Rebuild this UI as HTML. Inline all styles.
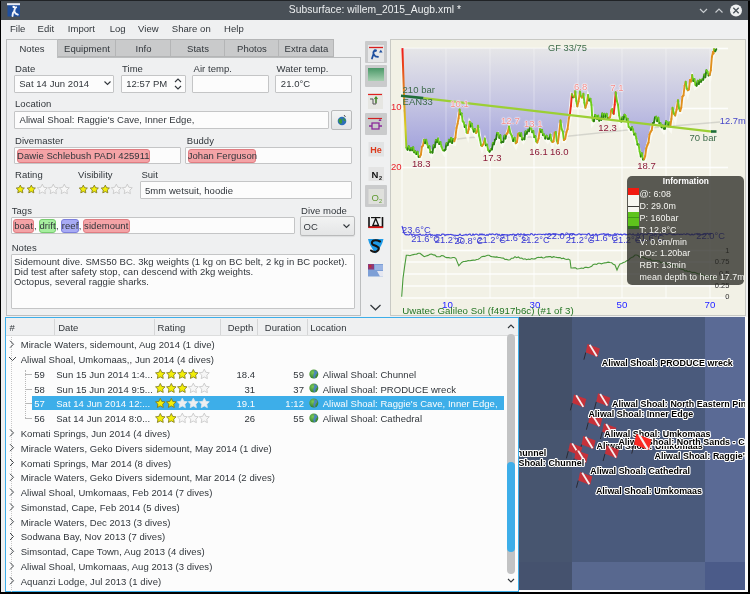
<!DOCTYPE html><html><head><meta charset="utf-8"><style>
html,body{margin:0;padding:0;width:750px;height:594px;overflow:hidden;background:#000}
body{position:relative;font-family:"Liberation Sans", sans-serif}
.t{position:absolute;white-space:nowrap;font-family:"Liberation Sans", sans-serif}
#w{position:absolute;left:0;top:0;width:750px;height:594px;will-change:transform}
.t{letter-spacing:0.05px}
</style></head><body><div id="w">
<div style="position:absolute;left:0px;top:0px;width:750px;height:594px;box-sizing:border-box;background:#000"></div>
<div style="position:absolute;left:1px;top:0px;width:747px;height:592px;box-sizing:border-box;background:#eff0f1"></div>
<div style="position:absolute;left:1px;top:0px;width:747px;height:19.5px;box-sizing:border-box;background:#495057"></div>
<div style="position:absolute;left:0px;top:0px;width:750px;height:1px;box-sizing:border-box;background:#202326"></div>
<svg style="position:absolute;left:6px;top:2px" width="16" height="16" viewBox="0 0 16 16">
<rect x="1.5" y="3" width="12.5" height="11.5" fill="#1f4f9e"/>
<rect x="1" y="1.2" width="13" height="2" fill="#e8ecf4"/>
<path d="M7.6 4.6 Q9.2 5 8.8 7 L8.2 9.2 L9.6 11.6 L11.8 12.6 M8.2 9.2 L6.9 11.2 L6.5 14 M8.8 6.2 L10.2 5.2" stroke="#f0f2f8" stroke-width="1.9" fill="none" stroke-linecap="round"/><circle cx="7.6" cy="5" r="1.1" fill="#fff"/>
</svg>
<div class="t" style="left:175.0px;width:400px;text-align:center;top:5.4px;font-size:10.3px;line-height:10.3px;color:#eef0f1;font-weight:normal;">Subsurface: willem_2015_Augb.xml *</div>
<svg style="position:absolute;left:696px;top:4px" width="50" height="14" viewBox="0 0 50 14">
<path d="M4 5 L7.5 8.5 L11 5" stroke="#c8ccd0" stroke-width="1.2" fill="none"/>
<path d="M19.5 8.5 L23 5 L26.5 8.5" stroke="#c8ccd0" stroke-width="1.2" fill="none"/>
<circle cx="40" cy="6.5" r="6" fill="#eef0f1"/>
<path d="M37.3 3.8 L42.7 9.2 M42.7 3.8 L37.3 9.2" stroke="#475057" stroke-width="1.3"/>
</svg>
<div class="t" style="left:9.9px;top:23.9px;font-size:9.5px;line-height:9.5px;color:#31363b;font-weight:normal;">File</div>
<div class="t" style="left:37.6px;top:23.9px;font-size:9.5px;line-height:9.5px;color:#31363b;font-weight:normal;">Edit</div>
<div class="t" style="left:67.8px;top:23.9px;font-size:9.5px;line-height:9.5px;color:#31363b;font-weight:normal;">Import</div>
<div class="t" style="left:109.7px;top:23.9px;font-size:9.5px;line-height:9.5px;color:#31363b;font-weight:normal;">Log</div>
<div class="t" style="left:138.1px;top:23.9px;font-size:9.5px;line-height:9.5px;color:#31363b;font-weight:normal;">View</div>
<div class="t" style="left:171.8px;top:23.9px;font-size:9.5px;line-height:9.5px;color:#31363b;font-weight:normal;">Share on</div>
<div class="t" style="left:224.1px;top:23.9px;font-size:9.5px;line-height:9.5px;color:#31363b;font-weight:normal;">Help</div>
<div style="position:absolute;left:6px;top:57px;width:355px;height:259px;box-sizing:border-box;background:#eff0f1;border:1px solid #bcbebf"></div>
<div style="position:absolute;left:6px;top:39px;width:52px;height:19px;box-sizing:border-box;background:#eff0f1;border:1px solid #bcbebf;border-bottom:none"></div>
<div class="t" style="left:-168.0px;width:400px;text-align:center;top:43.5px;font-size:9.5px;line-height:9.5px;color:#31363b;font-weight:normal;">Notes</div>
<div style="position:absolute;left:58px;top:39px;width:58px;height:18px;box-sizing:border-box;background:#c9cacb;border:1px solid #b4b5b6;border-left:none"></div>
<div class="t" style="left:-113.0px;width:400px;text-align:center;top:43.5px;font-size:9.5px;line-height:9.5px;color:#31363b;font-weight:normal;">Equipment</div>
<div style="position:absolute;left:116px;top:39px;width:55px;height:18px;box-sizing:border-box;background:#c9cacb;border:1px solid #b4b5b6;border-left:none"></div>
<div class="t" style="left:-56.5px;width:400px;text-align:center;top:43.5px;font-size:9.5px;line-height:9.5px;color:#31363b;font-weight:normal;">Info</div>
<div style="position:absolute;left:171px;top:39px;width:54px;height:18px;box-sizing:border-box;background:#c9cacb;border:1px solid #b4b5b6;border-left:none"></div>
<div class="t" style="left:-2.0px;width:400px;text-align:center;top:43.5px;font-size:9.5px;line-height:9.5px;color:#31363b;font-weight:normal;">Stats</div>
<div style="position:absolute;left:225px;top:39px;width:54px;height:18px;box-sizing:border-box;background:#c9cacb;border:1px solid #b4b5b6;border-left:none"></div>
<div class="t" style="left:52.0px;width:400px;text-align:center;top:43.5px;font-size:9.5px;line-height:9.5px;color:#31363b;font-weight:normal;">Photos</div>
<div style="position:absolute;left:279px;top:39px;width:55px;height:18px;box-sizing:border-box;background:#c9cacb;border:1px solid #b4b5b6;border-left:none"></div>
<div class="t" style="left:106.5px;width:400px;text-align:center;top:43.5px;font-size:9.5px;line-height:9.5px;color:#31363b;font-weight:normal;">Extra data</div>
<div class="t" style="left:15.0px;top:64.0px;font-size:9.5px;line-height:9.5px;color:#31363b;font-weight:normal;">Date</div>
<div class="t" style="left:122.0px;top:64.0px;font-size:9.5px;line-height:9.5px;color:#31363b;font-weight:normal;">Time</div>
<div class="t" style="left:193.5px;top:64.0px;font-size:9.5px;line-height:9.5px;color:#31363b;font-weight:normal;">Air temp.</div>
<div class="t" style="left:276.5px;top:64.0px;font-size:9.5px;line-height:9.5px;color:#31363b;font-weight:normal;">Water temp.</div>
<div style="position:absolute;left:14px;top:75px;width:100px;height:18px;box-sizing:border-box;background:#fcfcfc;border:1px solid #c4c5c6;border-radius:1px"></div>
<div class="t" style="left:19.2px;top:79.0px;font-size:9.5px;line-height:9.5px;color:#31363b;font-weight:normal;">Sat 14 Jun 2014</div>
<svg style="position:absolute;left:103px;top:80px" width="9" height="7"><path d="M1.5 1.5 L4.5 4.5 L7.5 1.5" stroke="#31363b" stroke-width="1.1" fill="none"/></svg>
<div style="position:absolute;left:121px;top:75px;width:65px;height:18px;box-sizing:border-box;background:#fcfcfc;border:1px solid #c4c5c6;border-radius:1px"></div>
<div class="t" style="left:126.2px;top:79.0px;font-size:9.5px;line-height:9.5px;color:#31363b;font-weight:normal;">12:57 PM</div>
<svg style="position:absolute;left:173px;top:77px" width="10" height="14"><path d="M2 5 L5 2 L8 5 M2 9 L5 12 L8 9" stroke="#31363b" stroke-width="1.1" fill="none"/></svg>
<div style="position:absolute;left:192px;top:75px;width:77px;height:18px;box-sizing:border-box;background:#fcfcfc;border:1px solid #c4c5c6;border-radius:1px"></div>
<div style="position:absolute;left:275px;top:75px;width:77px;height:18px;box-sizing:border-box;background:#fcfcfc;border:1px solid #c4c5c6;border-radius:1px"></div>
<div class="t" style="left:280.8px;top:79.0px;font-size:9.5px;line-height:9.5px;color:#31363b;font-weight:normal;">21.0°C</div>
<div class="t" style="left:15.0px;top:99.0px;font-size:9.5px;line-height:9.5px;color:#31363b;font-weight:normal;">Location</div>
<div style="position:absolute;left:14px;top:111px;width:315px;height:18px;box-sizing:border-box;background:#fcfcfc;border:1px solid #c4c5c6;border-radius:1px"></div>
<div class="t" style="left:19.5px;top:115.3px;font-size:9.5px;line-height:9.5px;color:#31363b;font-weight:normal;">Aliwal Shoal: Raggie's Cave, Inner Edge,</div>
<div style="position:absolute;left:331px;top:110px;width:21px;height:20px;box-sizing:border-box;background:linear-gradient(#f3f4f4,#e3e4e5);border:1px solid #b9babb;border-radius:2px"></div>
<svg style="position:absolute;left:336px;top:113px" width="12" height="14" viewBox="0 0 12 14">
<circle cx="6" cy="8" r="4.3" fill="#2e6fb8"/><path d="M3 6 Q5 5 6 7 Q7 9 5 11 Q3 10 2.5 8 Z M7 4.5 Q9 5.5 9.8 8 Q8.5 8.5 7.5 7 Z" fill="#3f9a35"/>
<path d="M8 2 L9.5 4" stroke="#555" stroke-width="1"/></svg>
<div class="t" style="left:15.0px;top:136.4px;font-size:9.5px;line-height:9.5px;color:#31363b;font-weight:normal;">Divemaster</div>
<div class="t" style="left:186.8px;top:136.4px;font-size:9.5px;line-height:9.5px;color:#31363b;font-weight:normal;">Buddy</div>
<div style="position:absolute;left:14px;top:147px;width:167px;height:17px;box-sizing:border-box;background:#fcfcfc;border:1px solid #c4c5c6;border-radius:1px"></div>
<div style="position:absolute;left:16.5px;top:148.5px;width:133.5px;height:14.5px;box-sizing:border-box;background:#f4a3a6;border:1px solid #e07d82;border-radius:3px"></div>
<div class="t" style="left:17.1px;top:151.0px;font-size:9.5px;line-height:9.5px;color:#31363b;font-weight:normal;">Dawie Schlebush PADI 425911</div>
<div style="position:absolute;left:185px;top:147px;width:167px;height:17px;box-sizing:border-box;background:#fcfcfc;border:1px solid #c4c5c6;border-radius:1px"></div>
<div style="position:absolute;left:187.5px;top:148.5px;width:68.5px;height:14.5px;box-sizing:border-box;background:#f4a3a6;border:1px solid #e07d82;border-radius:3px"></div>
<div class="t" style="left:187.7px;top:151.0px;font-size:9.5px;line-height:9.5px;color:#31363b;font-weight:normal;">Johan Ferguson</div>
<div class="t" style="left:15.0px;top:170.1px;font-size:9.5px;line-height:9.5px;color:#31363b;font-weight:normal;">Rating</div>
<div class="t" style="left:78.0px;top:170.1px;font-size:9.5px;line-height:9.5px;color:#31363b;font-weight:normal;">Visibility</div>
<div class="t" style="left:141.4px;top:170.1px;font-size:9.5px;line-height:9.5px;color:#31363b;font-weight:normal;">Suit</div>
<svg style="position:absolute;left:14.7px;top:183px" width="59" height="13" viewBox="0 0 59 13"><polygon points="5.30,2.10 6.56,4.66 9.39,5.07 7.34,7.06 7.83,9.88 5.30,8.55 2.77,9.88 3.26,7.06 1.21,5.07 4.04,4.66" fill="#f2ee08" stroke="#7a7418" stroke-width="0.8" stroke-linejoin="round"/><polygon points="16.30,2.10 17.56,4.66 20.39,5.07 18.34,7.06 18.83,9.88 16.30,8.55 13.77,9.88 14.26,7.06 12.21,5.07 15.04,4.66" fill="#f2ee08" stroke="#7a7418" stroke-width="0.8" stroke-linejoin="round"/><polygon points="27.30,1.15 28.84,4.28 32.29,4.78 29.80,7.21 30.39,10.65 27.30,9.03 24.21,10.65 24.80,7.21 22.31,4.78 25.76,4.28" fill="#f6f6f6" stroke="#c4c4c4" stroke-width="0.8" stroke-linejoin="round"/><polygon points="38.30,1.15 39.84,4.28 43.29,4.78 40.80,7.21 41.39,10.65 38.30,9.03 35.21,10.65 35.80,7.21 33.31,4.78 36.76,4.28" fill="#f6f6f6" stroke="#c4c4c4" stroke-width="0.8" stroke-linejoin="round"/><polygon points="49.30,1.15 50.84,4.28 54.29,4.78 51.80,7.21 52.39,10.65 49.30,9.03 46.21,10.65 46.80,7.21 44.31,4.78 47.76,4.28" fill="#f6f6f6" stroke="#c4c4c4" stroke-width="0.8" stroke-linejoin="round"/></svg>
<svg style="position:absolute;left:77.7px;top:183px" width="59" height="13" viewBox="0 0 59 13"><polygon points="5.30,2.10 6.56,4.66 9.39,5.07 7.34,7.06 7.83,9.88 5.30,8.55 2.77,9.88 3.26,7.06 1.21,5.07 4.04,4.66" fill="#f2ee08" stroke="#7a7418" stroke-width="0.8" stroke-linejoin="round"/><polygon points="16.30,2.10 17.56,4.66 20.39,5.07 18.34,7.06 18.83,9.88 16.30,8.55 13.77,9.88 14.26,7.06 12.21,5.07 15.04,4.66" fill="#f2ee08" stroke="#7a7418" stroke-width="0.8" stroke-linejoin="round"/><polygon points="27.30,2.10 28.56,4.66 31.39,5.07 29.34,7.06 29.83,9.88 27.30,8.55 24.77,9.88 25.26,7.06 23.21,5.07 26.04,4.66" fill="#f2ee08" stroke="#7a7418" stroke-width="0.8" stroke-linejoin="round"/><polygon points="38.30,1.15 39.84,4.28 43.29,4.78 40.80,7.21 41.39,10.65 38.30,9.03 35.21,10.65 35.80,7.21 33.31,4.78 36.76,4.28" fill="#f6f6f6" stroke="#c4c4c4" stroke-width="0.8" stroke-linejoin="round"/><polygon points="49.30,1.15 50.84,4.28 54.29,4.78 51.80,7.21 52.39,10.65 49.30,9.03 46.21,10.65 46.80,7.21 44.31,4.78 47.76,4.28" fill="#f6f6f6" stroke="#c4c4c4" stroke-width="0.8" stroke-linejoin="round"/></svg>
<div style="position:absolute;left:140px;top:181px;width:212px;height:18px;box-sizing:border-box;background:#fcfcfc;border:1px solid #c4c5c6;border-radius:1px"></div>
<div class="t" style="left:145.0px;top:185.5px;font-size:9.5px;line-height:9.5px;color:#31363b;font-weight:normal;">5mm wetsuit, hoodie</div>
<div class="t" style="left:11.7px;top:205.5px;font-size:9.5px;line-height:9.5px;color:#31363b;font-weight:normal;">Tags</div>
<div class="t" style="left:301.1px;top:205.5px;font-size:9.5px;line-height:9.5px;color:#31363b;font-weight:normal;">Dive mode</div>
<div style="position:absolute;left:11px;top:217px;width:284px;height:17px;box-sizing:border-box;background:#fcfcfc;border:1px solid #c4c5c6;border-radius:1px"></div>
<div style="position:absolute;left:13.2px;top:218.6px;width:21.000000000000004px;height:14.400000000000006px;box-sizing:border-box;background:#f4a3a6;border:1px solid #e07d82;border-radius:3px"></div>
<div class="t" style="left:14.2px;top:221.0px;font-size:9.5px;line-height:9.5px;color:#31363b;font-weight:normal;">boat</div>
<div style="position:absolute;left:38.5px;top:218.6px;width:17.700000000000003px;height:14.400000000000006px;box-sizing:border-box;background:#a6ef9f;border:1px solid #78cc70;border-radius:3px"></div>
<div class="t" style="left:39.5px;top:221.0px;font-size:9.5px;line-height:9.5px;color:#31363b;font-weight:normal;">drift</div>
<div style="position:absolute;left:60.8px;top:218.6px;width:18.200000000000003px;height:14.400000000000006px;box-sizing:border-box;background:#a8abf5;border:1px solid #7d80dd;border-radius:3px"></div>
<div class="t" style="left:61.8px;top:221.0px;font-size:9.5px;line-height:9.5px;color:#31363b;font-weight:normal;">reef</div>
<div style="position:absolute;left:83.1px;top:218.6px;width:47.400000000000006px;height:14.400000000000006px;box-sizing:border-box;background:#f4a3a6;border:1px solid #e07d82;border-radius:3px"></div>
<div class="t" style="left:84.1px;top:221.0px;font-size:9.5px;line-height:9.5px;color:#31363b;font-weight:normal;">sidemount</div>
<div class="t" style="left:34.0px;top:221.0px;font-size:9.5px;line-height:9.5px;color:#31363b;font-weight:normal;">,</div>
<div class="t" style="left:56.0px;top:221.0px;font-size:9.5px;line-height:9.5px;color:#31363b;font-weight:normal;">,</div>
<div class="t" style="left:78.7px;top:221.0px;font-size:9.5px;line-height:9.5px;color:#31363b;font-weight:normal;">,</div>
<div style="position:absolute;left:300px;top:216px;width:55px;height:20px;box-sizing:border-box;background:linear-gradient(#f2f3f3,#e4e5e6);border:1px solid #b9babb;border-radius:2px;box-shadow:0 1px 1px rgba(0,0,0,0.08)"></div>
<div class="t" style="left:303.5px;top:221.5px;font-size:9.5px;line-height:9.5px;color:#31363b;font-weight:normal;">OC</div>
<svg style="position:absolute;left:342px;top:223px" width="9" height="7"><path d="M1.5 1.5 L4.5 4.5 L7.5 1.5" stroke="#31363b" stroke-width="1.1" fill="none"/></svg>
<div class="t" style="left:11.7px;top:242.7px;font-size:9.5px;line-height:9.5px;color:#31363b;font-weight:normal;">Notes</div>
<div style="position:absolute;left:11px;top:254px;width:344px;height:55px;box-sizing:border-box;background:#fcfcfc;border:1px solid #c4c5c6;border-radius:1px"></div>
<div class="t" style="left:13.9px;top:256.8px;font-size:9.5px;line-height:9.5px;color:#31363b;font-weight:normal;">Sidemount dive. SMS50 BC. 3kg weights (1 kg on BC belt, 2 kg in BC pocket).</div>
<div class="t" style="left:13.9px;top:266.7px;font-size:9.5px;line-height:9.5px;color:#31363b;font-weight:normal;">Did test after safety stop, can descend with 2kg weights.</div>
<div class="t" style="left:13.9px;top:276.5px;font-size:9.5px;line-height:9.5px;color:#31363b;font-weight:normal;">Octopus, several raggie sharks.</div>
<div style="position:absolute;left:365px;top:40.5px;width:22px;height:22.5px;box-sizing:border-box;background:#cacbcc;border-radius:1px"></div>
<div style="position:absolute;left:365px;top:64.5px;width:22px;height:22.5px;box-sizing:border-box;background:#cacbcc;border-radius:1px"></div>
<div style="position:absolute;left:365px;top:112.5px;width:22px;height:22.5px;box-sizing:border-box;background:#cacbcc;border-radius:1px"></div>
<div style="position:absolute;left:365px;top:184.5px;width:22px;height:22.5px;box-sizing:border-box;background:#cacbcc;border-radius:1px"></div>
<svg style="position:absolute;left:365px;top:41px" width="21" height="280" viewBox="0 0 21 280">
<!-- 1 -->
<rect x="3" y="4" width="16" height="17" fill="#e6e7e8"/>
<line x1="4" y1="6.5" x2="18" y2="6.5" stroke="#d81e1e" stroke-width="1.3"/>
<path d="M9.5 9.5 Q8 11 8.5 13 L7 17.5 M8.5 13 L10.5 15.5 L13 15.8" stroke="#1f4f9e" stroke-width="1.8" fill="none" stroke-linecap="round"/>
<circle cx="10.5" cy="9.6" r="1.4" fill="#1f4f9e"/>
<path d="M14 11.5 L15.8 8.8 L17.6 11.5 Z" fill="#1f4f9e"/>
<!-- 2 -->
<defs><linearGradient id="g2" x1="0" y1="0" x2="0" y2="1"><stop offset="0" stop-color="#4a9868"/><stop offset="1" stop-color="#a6d0b0"/></linearGradient></defs>
<rect x="3" y="27" width="16" height="13" fill="url(#g2)"/>
<!-- 3 -->
<rect x="3" y="52" width="15" height="16" fill="#e6e6e2"/>
<line x1="3" y1="53.5" x2="17" y2="53.5" stroke="#e02020" stroke-width="1.2"/>
<path d="M5 58 L8 58 L8 63 L11 63 L11 58" stroke="#555" stroke-width="1" fill="none"/>
<path d="M11 62 L11 56.5 M9.5 58 L11 56 L12.5 58" stroke="#3b8a20" stroke-width="1.1" fill="none"/>
<!-- 4 -->
<line x1="3" y1="77.5" x2="17" y2="77.5" stroke="#d02020" stroke-width="1.2"/>
<rect x="7" y="82" width="7" height="6" fill="none" stroke="#8a2a9a" stroke-width="1.3"/>
<path d="M4 85 L7 85 M14 85 L17 85" stroke="#8a2a9a" stroke-width="1.3"/>
<path d="M13.5 80 L15 77.5 L16.5 80 Z" fill="#8a2a9a"/>
<!-- He -->
<rect x="3.5" y="101" width="15.5" height="14.5" fill="#e2e3e4"/>
<text x="11" y="112" font-family="Liberation Sans" font-size="9" font-weight="bold" fill="#dd3a1c" text-anchor="middle">He</text>
<!-- N2 -->
<rect x="3.5" y="126" width="15.5" height="14" fill="#e4e4e4"/>
<text x="6.5" y="137" font-family="Liberation Sans" font-size="9.5" font-weight="bold" fill="#111">N</text>
<text x="14" y="138.5" font-family="Liberation Sans" font-size="5.5" font-weight="bold" fill="#111">2</text>
<!-- O2 -->
<rect x="3.5" y="148" width="15.5" height="15" fill="#dfe0dc"/>
<text x="6.5" y="160" font-family="Liberation Sans" font-size="9.5" fill="#5f9a30">O</text>
<text x="14" y="161.5" font-family="Liberation Sans" font-size="5.5" fill="#5f9a30">2</text>
<!-- delta -->
<path d="M4 176 L4 186 L17.5 186 L17.5 176" stroke="#111" stroke-width="1.6" fill="none"/>
<line x1="6" y1="176.6" x2="15.5" y2="176.6" stroke="#111" stroke-width="1.2"/>
<path d="M10.7 177.5 L7.8 184.5 L13.6 184.5 Z" stroke="#111" stroke-width="1.3" fill="none"/>
<line x1="3.5" y1="186.3" x2="18" y2="186.3" stroke="#e01010" stroke-width="1.6"/>
<!-- S -->
<path d="M3 198 L18.5 198 Q17 205 10.8 212.5 Q4.5 205 3 198 Z" fill="#1e9be8"/>
<path d="M15 200.5 Q11 198.3 8 199.8 Q5.8 201.5 8 203.8 Q11.5 205 13.5 206.5 Q14.5 209 11.5 210.5 Q8.5 211.5 6 209.5" stroke="#151515" stroke-width="2.1" fill="none" stroke-linecap="round"/>
<!-- photo -->
<rect x="3" y="223" width="15" height="12.5" fill="#7d9fd6"/>
<rect x="3" y="223" width="6" height="5.5" fill="#8a3a7a"/>
<rect x="4" y="224" width="2.5" height="2.5" fill="#c02a3a"/>
<rect x="10" y="224" width="8" height="5" fill="#9ab4e4"/>
<path d="M12 230 L18 230 L18 235.5 L15 235.5 Z" fill="#e6e8f2"/>
<!-- chevron -->
<path d="M5.5 264 L10.5 268.8 L15.5 264" stroke="#31363b" stroke-width="1.2" fill="none"/>
</svg>
<div style="position:absolute;left:390px;top:39px;width:356px;height:277px;box-sizing:border-box;border:1px solid #c8c9c4;background:#f2f1e6"></div>
<svg style="position:absolute;left:0;top:0" width="750" height="594" viewBox="0 0 750 594">
<defs><linearGradient id="pf" x1="0" y1="48" x2="0" y2="160" gradientUnits="userSpaceOnUse"><stop offset="0" stop-color="#e6e6e8"/><stop offset="0.5" stop-color="#c4c4e2"/><stop offset="1" stop-color="#9c9cdc"/></linearGradient></defs>
<line x1="402" y1="48" x2="402" y2="298" stroke="#ffffff" stroke-width="1.1" opacity="0.75"/>
<line x1="446" y1="48" x2="446" y2="298" stroke="#ffffff" stroke-width="1.1" opacity="0.75"/>
<line x1="490" y1="48" x2="490" y2="298" stroke="#ffffff" stroke-width="1.1" opacity="0.75"/>
<line x1="534" y1="48" x2="534" y2="298" stroke="#ffffff" stroke-width="1.1" opacity="0.75"/>
<line x1="578" y1="48" x2="578" y2="298" stroke="#ffffff" stroke-width="1.1" opacity="0.75"/>
<line x1="622" y1="48" x2="622" y2="298" stroke="#ffffff" stroke-width="1.1" opacity="0.75"/>
<line x1="666" y1="48" x2="666" y2="298" stroke="#ffffff" stroke-width="1.1" opacity="0.75"/>
<line x1="710" y1="48" x2="710" y2="298" stroke="#ffffff" stroke-width="1.1" opacity="0.75"/>
<line x1="402" y1="48.5" x2="728" y2="48.5" stroke="#ffffff" stroke-width="1.3" opacity="0.9"/>
<line x1="402" y1="108.5" x2="728" y2="108.5" stroke="#ffffff" stroke-width="1.3" opacity="0.9"/>
<line x1="402" y1="167.5" x2="728" y2="167.5" stroke="#ffffff" stroke-width="1.3" opacity="0.9"/>
<line x1="402" y1="250.5" x2="728" y2="250.5" stroke="#ffffff" stroke-width="1.3" opacity="0.9"/>
<line x1="402" y1="262" x2="728" y2="262" stroke="#ffffff" stroke-width="1.3" opacity="0.9"/>
<line x1="402" y1="274" x2="728" y2="274" stroke="#ffffff" stroke-width="1.3" opacity="0.9"/>
<line x1="402" y1="286" x2="728" y2="286" stroke="#ffffff" stroke-width="1.3" opacity="0.9"/>
<line x1="402" y1="298" x2="728" y2="298" stroke="#ffffff" stroke-width="1.3" opacity="0.9"/>
<path d="M404 110 Q410 140 432 144 Q455 138 480 137 L560 137 Q640 128 720 122" stroke="#c8c8c0" stroke-width="1.3" fill="none" opacity="0.7"/>
<polygon points="402.4,48.1 404.4,106.2 406.4,147.9 411.2,147.9 415.2,151.3 419.9,156.7 424,139.8 427.3,143.9 431.4,152 438.1,138.5 441.5,146.6 444.2,150.6 448.9,139.8 454.3,141.2 457.6,123.7 459.6,109.5 463.7,122.3 467.7,133.1 469.7,121.6 472.7,128.4 476,133 478,125.7 480.1,139.8 482.1,145.9 484.8,138.5 488.2,150 490.9,149.3 494.9,139.8 498.3,133.1 502.3,141.9 506.4,134.4 509,126.4 511.8,135.8 515.8,143.2 519.2,133.1 523.2,138.5 527.9,129.7 531.3,128.4 537.3,142.5 540,129 544,134.4 547.7,138.7 550.4,134.6 552.4,142 555.8,132 557.8,143.4 560.5,120.5 563.9,140 566.5,132 569.9,114.4 571.9,94.2 574,96.9 575.3,90.9 577.3,106.4 580,91.5 582,97.6 583.4,93.6 585.4,107.7 588.1,94.9 591.5,105 592.8,120.5 596.2,115.8 600.2,118.5 604.3,113.8 609,117.8 612.3,109 613.7,113.8 615.7,92.2 620.4,121.2 625.5,115.5 629.8,127.5 633.1,129.7 636.4,138.5 639.7,151.6 644.1,159.3 647.4,145 650.6,131.9 652.8,123.2 656.1,116.6 660.5,123.2 663.8,128.6 667.1,122.1 670.3,126.5 672.5,107.8 675.2,115.5 678,100.2 680.2,111.1 685.7,81.6 687.8,90.3 692.2,75 695.5,84.9 702.1,79.4 707.5,71.7 709.7,75 713,52 714.1,49.2 716.3,49.2 716.3,48.5 402.4,48.5" fill="url(#pf)"/>
<line x1="446" y1="49" x2="446" y2="165" stroke="#ffffff" stroke-width="1.1" opacity="0.3"/>
<line x1="490" y1="49" x2="490" y2="165" stroke="#ffffff" stroke-width="1.1" opacity="0.3"/>
<line x1="534" y1="49" x2="534" y2="165" stroke="#ffffff" stroke-width="1.1" opacity="0.3"/>
<line x1="578" y1="49" x2="578" y2="165" stroke="#ffffff" stroke-width="1.1" opacity="0.3"/>
<line x1="622" y1="49" x2="622" y2="165" stroke="#ffffff" stroke-width="1.1" opacity="0.3"/>
<line x1="666" y1="49" x2="666" y2="165" stroke="#ffffff" stroke-width="1.1" opacity="0.3"/>
<line x1="710" y1="49" x2="710" y2="165" stroke="#ffffff" stroke-width="1.1" opacity="0.3"/>
<linearGradient id="dg" x1="0" y1="48" x2="0" y2="148" gradientUnits="userSpaceOnUse"><stop offset="0" stop-color="#f01818"/><stop offset="0.45" stop-color="#e08a20"/><stop offset="0.8" stop-color="#d8d020"/><stop offset="1" stop-color="#8ac820"/></linearGradient>
<polyline points="406.4,150.4 411.2,150.4 415.2,153.8 419.9,159.2 424,142.3 427.3,146.4 431.4,154.5 438.1,141.0 441.5,149.1 444.2,153.1 448.9,142.3 454.3,143.7 457.6,126.2 459.6,112.0 463.7,124.8 467.7,135.6 469.7,124.1 472.7,130.9 476,135.5 478,128.2 480.1,142.3 482.1,148.4 484.8,141.0 488.2,152.5 490.9,151.8 494.9,142.3 498.3,135.6 502.3,144.4 506.4,136.9 509,128.9 511.8,138.3 515.8,145.7 519.2,135.6 523.2,141.0 527.9,132.2 531.3,130.9 537.3,145.0 540,131.5 544,136.9 547.7,141.2 550.4,137.1 552.4,144.5 555.8,134.5 557.8,145.9 560.5,123.0 563.9,142.5 566.5,134.5 569.9,116.9 571.9,96.7 574,99.4 575.3,93.4 577.3,108.9 580,94.0 582,100.1 583.4,96.1 585.4,110.2 588.1,97.4 591.5,107.5 592.8,123.0 596.2,118.3 600.2,121.0 604.3,116.3 609,120.3 612.3,111.5 613.7,116.3 615.7,94.7 620.4,123.7 625.5,118.0 629.8,130.0 633.1,132.2 636.4,141.0 639.7,154.1 644.1,161.8 647.4,147.5 650.6,134.4 652.8,125.7 656.1,119.1 660.5,125.7 663.8,131.1 667.1,124.6 670.3,129.0 672.5,110.3 675.2,118.0 678,102.7 680.2,113.6 685.7,84.1 687.8,92.8 692.2,77.5 695.5,87.4 702.1,81.9 707.5,74.2 709.7,77.5 713,54.5 714.1,51.7 716.3,51.7" stroke="#fbfbf4" stroke-width="4" fill="none" opacity="0.9"/>
<polyline points="402.4,48.1 404.4,106.2 406.4,147.9" stroke="url(#dg)" stroke-width="2" fill="none"/>
<line x1="406.4" y1="147.9" x2="407.6" y2="149.8" stroke="#6ccc1e" stroke-width="1.9" stroke-linecap="round"/>
<line x1="407.6" y1="149.8" x2="408.8" y2="146.3" stroke="#2a7a16" stroke-width="1.9" stroke-linecap="round"/>
<line x1="408.8" y1="146.3" x2="410.0" y2="150.3" stroke="#6ccc1e" stroke-width="1.9" stroke-linecap="round"/>
<line x1="410.0" y1="150.3" x2="411.2" y2="147.9" stroke="#2a7a16" stroke-width="1.9" stroke-linecap="round"/>
<line x1="411.2" y1="147.9" x2="412.2" y2="150.3" stroke="#6ccc1e" stroke-width="1.9" stroke-linecap="round"/>
<line x1="412.2" y1="150.3" x2="413.2" y2="147.3" stroke="#2a7a16" stroke-width="1.9" stroke-linecap="round"/>
<line x1="413.2" y1="147.3" x2="414.2" y2="152.4" stroke="#6ccc1e" stroke-width="1.9" stroke-linecap="round"/>
<line x1="414.2" y1="152.4" x2="415.2" y2="151.3" stroke="#2a7a16" stroke-width="1.9" stroke-linecap="round"/>
<line x1="415.2" y1="151.3" x2="416.4" y2="154.1" stroke="#6ccc1e" stroke-width="1.9" stroke-linecap="round"/>
<line x1="416.4" y1="154.1" x2="417.5" y2="151.8" stroke="#2a7a16" stroke-width="1.9" stroke-linecap="round"/>
<line x1="417.5" y1="151.8" x2="418.7" y2="156.8" stroke="#6ccc1e" stroke-width="1.9" stroke-linecap="round"/>
<line x1="418.7" y1="156.8" x2="419.9" y2="156.7" stroke="#2a7a16" stroke-width="1.9" stroke-linecap="round"/>
<line x1="419.9" y1="156.7" x2="420.9" y2="154.6" stroke="#e0901e" stroke-width="1.9" stroke-linecap="round"/>
<line x1="420.9" y1="154.6" x2="421.9" y2="146.7" stroke="#e0901e" stroke-width="1.9" stroke-linecap="round"/>
<line x1="421.9" y1="146.7" x2="423.0" y2="145.6" stroke="#e0901e" stroke-width="1.9" stroke-linecap="round"/>
<line x1="423.0" y1="145.6" x2="424.0" y2="139.8" stroke="#e0901e" stroke-width="1.9" stroke-linecap="round"/>
<line x1="424.0" y1="139.8" x2="425.1" y2="143.2" stroke="#6ccc1e" stroke-width="1.9" stroke-linecap="round"/>
<line x1="425.1" y1="143.2" x2="426.2" y2="139.8" stroke="#2a7a16" stroke-width="1.9" stroke-linecap="round"/>
<line x1="426.2" y1="139.8" x2="427.3" y2="143.9" stroke="#6ccc1e" stroke-width="1.9" stroke-linecap="round"/>
<line x1="427.3" y1="143.9" x2="428.3" y2="147.5" stroke="#6ccc1e" stroke-width="1.9" stroke-linecap="round"/>
<line x1="428.3" y1="147.5" x2="429.4" y2="146.2" stroke="#2a7a16" stroke-width="1.9" stroke-linecap="round"/>
<line x1="429.4" y1="146.2" x2="430.4" y2="152.4" stroke="#6ccc1e" stroke-width="1.9" stroke-linecap="round"/>
<line x1="430.4" y1="152.4" x2="431.4" y2="152.0" stroke="#2a7a16" stroke-width="1.9" stroke-linecap="round"/>
<line x1="431.4" y1="152.0" x2="432.5" y2="152.7" stroke="#6ccc1e" stroke-width="1.9" stroke-linecap="round"/>
<line x1="432.5" y1="152.7" x2="433.6" y2="145.2" stroke="#2a7a16" stroke-width="1.9" stroke-linecap="round"/>
<line x1="433.6" y1="145.2" x2="434.8" y2="147.3" stroke="#6ccc1e" stroke-width="1.9" stroke-linecap="round"/>
<line x1="434.8" y1="147.3" x2="435.9" y2="140.0" stroke="#2a7a16" stroke-width="1.9" stroke-linecap="round"/>
<line x1="435.9" y1="140.0" x2="437.0" y2="142.2" stroke="#6ccc1e" stroke-width="1.9" stroke-linecap="round"/>
<line x1="437.0" y1="142.2" x2="438.1" y2="138.5" stroke="#2a7a16" stroke-width="1.9" stroke-linecap="round"/>
<line x1="438.1" y1="138.5" x2="439.2" y2="144.0" stroke="#6ccc1e" stroke-width="1.9" stroke-linecap="round"/>
<line x1="439.2" y1="144.0" x2="440.4" y2="142.0" stroke="#2a7a16" stroke-width="1.9" stroke-linecap="round"/>
<line x1="440.4" y1="142.0" x2="441.5" y2="146.6" stroke="#6ccc1e" stroke-width="1.9" stroke-linecap="round"/>
<line x1="441.5" y1="146.6" x2="442.9" y2="150.2" stroke="#6ccc1e" stroke-width="1.9" stroke-linecap="round"/>
<line x1="442.9" y1="150.2" x2="444.2" y2="150.6" stroke="#6ccc1e" stroke-width="1.9" stroke-linecap="round"/>
<line x1="444.2" y1="150.6" x2="445.4" y2="149.5" stroke="#2a7a16" stroke-width="1.9" stroke-linecap="round"/>
<line x1="445.4" y1="149.5" x2="446.5" y2="143.3" stroke="#2a7a16" stroke-width="1.9" stroke-linecap="round"/>
<line x1="446.5" y1="143.3" x2="447.7" y2="145.2" stroke="#6ccc1e" stroke-width="1.9" stroke-linecap="round"/>
<line x1="447.7" y1="145.2" x2="448.9" y2="139.8" stroke="#2a7a16" stroke-width="1.9" stroke-linecap="round"/>
<line x1="448.9" y1="139.8" x2="450.0" y2="141.8" stroke="#6ccc1e" stroke-width="1.9" stroke-linecap="round"/>
<line x1="450.0" y1="141.8" x2="451.1" y2="138.0" stroke="#2a7a16" stroke-width="1.9" stroke-linecap="round"/>
<line x1="451.1" y1="138.0" x2="452.1" y2="143.1" stroke="#6ccc1e" stroke-width="1.9" stroke-linecap="round"/>
<line x1="452.1" y1="143.1" x2="453.2" y2="138.9" stroke="#2a7a16" stroke-width="1.9" stroke-linecap="round"/>
<line x1="453.2" y1="138.9" x2="454.3" y2="141.2" stroke="#6ccc1e" stroke-width="1.9" stroke-linecap="round"/>
<line x1="454.3" y1="141.2" x2="455.4" y2="137.6" stroke="#e0901e" stroke-width="1.9" stroke-linecap="round"/>
<line x1="455.4" y1="137.6" x2="456.5" y2="128.0" stroke="#e0901e" stroke-width="1.9" stroke-linecap="round"/>
<line x1="456.5" y1="128.0" x2="457.6" y2="123.7" stroke="#e0901e" stroke-width="1.9" stroke-linecap="round"/>
<line x1="457.6" y1="123.7" x2="458.6" y2="118.1" stroke="#e0901e" stroke-width="1.9" stroke-linecap="round"/>
<line x1="458.6" y1="118.1" x2="459.6" y2="109.5" stroke="#e0901e" stroke-width="1.9" stroke-linecap="round"/>
<line x1="459.6" y1="109.5" x2="460.6" y2="114.4" stroke="#6ccc1e" stroke-width="1.9" stroke-linecap="round"/>
<line x1="460.6" y1="114.4" x2="461.6" y2="113.4" stroke="#2a7a16" stroke-width="1.9" stroke-linecap="round"/>
<line x1="461.6" y1="113.4" x2="462.7" y2="121.2" stroke="#6ccc1e" stroke-width="1.9" stroke-linecap="round"/>
<line x1="462.7" y1="121.2" x2="463.7" y2="122.3" stroke="#6ccc1e" stroke-width="1.9" stroke-linecap="round"/>
<line x1="463.7" y1="122.3" x2="464.7" y2="126.9" stroke="#6ccc1e" stroke-width="1.9" stroke-linecap="round"/>
<line x1="464.7" y1="126.9" x2="465.7" y2="125.4" stroke="#2a7a16" stroke-width="1.9" stroke-linecap="round"/>
<line x1="465.7" y1="125.4" x2="466.7" y2="132.5" stroke="#6ccc1e" stroke-width="1.9" stroke-linecap="round"/>
<line x1="466.7" y1="132.5" x2="467.7" y2="133.1" stroke="#6ccc1e" stroke-width="1.9" stroke-linecap="round"/>
<line x1="467.7" y1="133.1" x2="468.7" y2="129.2" stroke="#e0901e" stroke-width="1.9" stroke-linecap="round"/>
<line x1="468.7" y1="129.2" x2="469.7" y2="121.6" stroke="#e0901e" stroke-width="1.9" stroke-linecap="round"/>
<line x1="469.7" y1="121.6" x2="470.7" y2="126.5" stroke="#6ccc1e" stroke-width="1.9" stroke-linecap="round"/>
<line x1="470.7" y1="126.5" x2="471.7" y2="123.6" stroke="#2a7a16" stroke-width="1.9" stroke-linecap="round"/>
<line x1="471.7" y1="123.6" x2="472.7" y2="128.4" stroke="#6ccc1e" stroke-width="1.9" stroke-linecap="round"/>
<line x1="472.7" y1="128.4" x2="473.8" y2="131.7" stroke="#6ccc1e" stroke-width="1.9" stroke-linecap="round"/>
<line x1="473.8" y1="131.7" x2="474.9" y2="129.1" stroke="#2a7a16" stroke-width="1.9" stroke-linecap="round"/>
<line x1="474.9" y1="129.1" x2="476.0" y2="133.0" stroke="#6ccc1e" stroke-width="1.9" stroke-linecap="round"/>
<line x1="476.0" y1="133.0" x2="477.0" y2="131.6" stroke="#e0901e" stroke-width="1.9" stroke-linecap="round"/>
<line x1="477.0" y1="131.6" x2="478.0" y2="125.7" stroke="#e0901e" stroke-width="1.9" stroke-linecap="round"/>
<line x1="478.0" y1="125.7" x2="479.1" y2="135.6" stroke="#6ccc1e" stroke-width="1.9" stroke-linecap="round"/>
<line x1="479.1" y1="135.6" x2="480.1" y2="139.8" stroke="#6ccc1e" stroke-width="1.9" stroke-linecap="round"/>
<line x1="480.1" y1="139.8" x2="481.1" y2="145.4" stroke="#6ccc1e" stroke-width="1.9" stroke-linecap="round"/>
<line x1="481.1" y1="145.4" x2="482.1" y2="145.9" stroke="#6ccc1e" stroke-width="1.9" stroke-linecap="round"/>
<line x1="482.1" y1="145.9" x2="483.5" y2="144.1" stroke="#e0901e" stroke-width="1.9" stroke-linecap="round"/>
<line x1="483.5" y1="144.1" x2="484.8" y2="138.5" stroke="#e0901e" stroke-width="1.9" stroke-linecap="round"/>
<line x1="484.8" y1="138.5" x2="485.9" y2="145.3" stroke="#6ccc1e" stroke-width="1.9" stroke-linecap="round"/>
<line x1="485.9" y1="145.3" x2="487.1" y2="144.6" stroke="#2a7a16" stroke-width="1.9" stroke-linecap="round"/>
<line x1="487.1" y1="144.6" x2="488.2" y2="150.0" stroke="#6ccc1e" stroke-width="1.9" stroke-linecap="round"/>
<line x1="488.2" y1="150.0" x2="489.5" y2="151.7" stroke="#6ccc1e" stroke-width="1.9" stroke-linecap="round"/>
<line x1="489.5" y1="151.7" x2="490.9" y2="149.3" stroke="#2a7a16" stroke-width="1.9" stroke-linecap="round"/>
<line x1="490.9" y1="149.3" x2="491.9" y2="149.5" stroke="#6ccc1e" stroke-width="1.9" stroke-linecap="round"/>
<line x1="491.9" y1="149.5" x2="492.9" y2="142.9" stroke="#2a7a16" stroke-width="1.9" stroke-linecap="round"/>
<line x1="492.9" y1="142.9" x2="493.9" y2="144.4" stroke="#6ccc1e" stroke-width="1.9" stroke-linecap="round"/>
<line x1="493.9" y1="144.4" x2="494.9" y2="139.8" stroke="#2a7a16" stroke-width="1.9" stroke-linecap="round"/>
<line x1="494.9" y1="139.8" x2="496.0" y2="139.0" stroke="#2a7a16" stroke-width="1.9" stroke-linecap="round"/>
<line x1="496.0" y1="139.0" x2="497.2" y2="132.9" stroke="#2a7a16" stroke-width="1.9" stroke-linecap="round"/>
<line x1="497.2" y1="132.9" x2="498.3" y2="133.1" stroke="#6ccc1e" stroke-width="1.9" stroke-linecap="round"/>
<line x1="498.3" y1="133.1" x2="499.3" y2="137.9" stroke="#6ccc1e" stroke-width="1.9" stroke-linecap="round"/>
<line x1="499.3" y1="137.9" x2="500.3" y2="135.2" stroke="#2a7a16" stroke-width="1.9" stroke-linecap="round"/>
<line x1="500.3" y1="135.2" x2="501.3" y2="142.5" stroke="#6ccc1e" stroke-width="1.9" stroke-linecap="round"/>
<line x1="501.3" y1="142.5" x2="502.3" y2="141.9" stroke="#2a7a16" stroke-width="1.9" stroke-linecap="round"/>
<line x1="502.3" y1="141.9" x2="503.3" y2="141.9" stroke="#2a7a16" stroke-width="1.9" stroke-linecap="round"/>
<line x1="503.3" y1="141.9" x2="504.4" y2="135.6" stroke="#2a7a16" stroke-width="1.9" stroke-linecap="round"/>
<line x1="504.4" y1="135.6" x2="505.4" y2="138.6" stroke="#6ccc1e" stroke-width="1.9" stroke-linecap="round"/>
<line x1="505.4" y1="138.6" x2="506.4" y2="134.4" stroke="#2a7a16" stroke-width="1.9" stroke-linecap="round"/>
<line x1="506.4" y1="134.4" x2="507.7" y2="132.7" stroke="#e0901e" stroke-width="1.9" stroke-linecap="round"/>
<line x1="507.7" y1="132.7" x2="509.0" y2="126.4" stroke="#e0901e" stroke-width="1.9" stroke-linecap="round"/>
<line x1="509.0" y1="126.4" x2="510.4" y2="133.2" stroke="#6ccc1e" stroke-width="1.9" stroke-linecap="round"/>
<line x1="510.4" y1="133.2" x2="511.8" y2="135.8" stroke="#6ccc1e" stroke-width="1.9" stroke-linecap="round"/>
<line x1="511.8" y1="135.8" x2="513.1" y2="141.0" stroke="#6ccc1e" stroke-width="1.9" stroke-linecap="round"/>
<line x1="513.1" y1="141.0" x2="514.5" y2="137.8" stroke="#2a7a16" stroke-width="1.9" stroke-linecap="round"/>
<line x1="514.5" y1="137.8" x2="515.8" y2="143.2" stroke="#6ccc1e" stroke-width="1.9" stroke-linecap="round"/>
<line x1="515.8" y1="143.2" x2="516.9" y2="142.0" stroke="#e0901e" stroke-width="1.9" stroke-linecap="round"/>
<line x1="516.9" y1="142.0" x2="518.1" y2="134.0" stroke="#e0901e" stroke-width="1.9" stroke-linecap="round"/>
<line x1="518.1" y1="134.0" x2="519.2" y2="133.1" stroke="#e0901e" stroke-width="1.9" stroke-linecap="round"/>
<line x1="519.2" y1="133.1" x2="520.2" y2="135.9" stroke="#6ccc1e" stroke-width="1.9" stroke-linecap="round"/>
<line x1="520.2" y1="135.9" x2="521.2" y2="133.3" stroke="#2a7a16" stroke-width="1.9" stroke-linecap="round"/>
<line x1="521.2" y1="133.3" x2="522.2" y2="139.6" stroke="#6ccc1e" stroke-width="1.9" stroke-linecap="round"/>
<line x1="522.2" y1="139.6" x2="523.2" y2="138.5" stroke="#2a7a16" stroke-width="1.9" stroke-linecap="round"/>
<line x1="523.2" y1="138.5" x2="524.4" y2="139.3" stroke="#6ccc1e" stroke-width="1.9" stroke-linecap="round"/>
<line x1="524.4" y1="139.3" x2="525.5" y2="131.4" stroke="#2a7a16" stroke-width="1.9" stroke-linecap="round"/>
<line x1="525.5" y1="131.4" x2="526.7" y2="133.8" stroke="#6ccc1e" stroke-width="1.9" stroke-linecap="round"/>
<line x1="526.7" y1="133.8" x2="527.9" y2="129.7" stroke="#2a7a16" stroke-width="1.9" stroke-linecap="round"/>
<line x1="527.9" y1="129.7" x2="529.0" y2="131.3" stroke="#6ccc1e" stroke-width="1.9" stroke-linecap="round"/>
<line x1="529.0" y1="131.3" x2="530.2" y2="126.4" stroke="#2a7a16" stroke-width="1.9" stroke-linecap="round"/>
<line x1="530.2" y1="126.4" x2="531.3" y2="128.4" stroke="#6ccc1e" stroke-width="1.9" stroke-linecap="round"/>
<line x1="531.3" y1="128.4" x2="532.3" y2="132.2" stroke="#6ccc1e" stroke-width="1.9" stroke-linecap="round"/>
<line x1="532.3" y1="132.2" x2="533.3" y2="131.0" stroke="#2a7a16" stroke-width="1.9" stroke-linecap="round"/>
<line x1="533.3" y1="131.0" x2="534.3" y2="137.1" stroke="#6ccc1e" stroke-width="1.9" stroke-linecap="round"/>
<line x1="534.3" y1="137.1" x2="535.3" y2="136.2" stroke="#2a7a16" stroke-width="1.9" stroke-linecap="round"/>
<line x1="535.3" y1="136.2" x2="536.3" y2="141.6" stroke="#6ccc1e" stroke-width="1.9" stroke-linecap="round"/>
<line x1="536.3" y1="141.6" x2="537.3" y2="142.5" stroke="#6ccc1e" stroke-width="1.9" stroke-linecap="round"/>
<line x1="537.3" y1="142.5" x2="538.6" y2="138.4" stroke="#e0901e" stroke-width="1.9" stroke-linecap="round"/>
<line x1="538.6" y1="138.4" x2="540.0" y2="129.0" stroke="#e0901e" stroke-width="1.9" stroke-linecap="round"/>
<line x1="540.0" y1="129.0" x2="541.0" y2="132.0" stroke="#6ccc1e" stroke-width="1.9" stroke-linecap="round"/>
<line x1="541.0" y1="132.0" x2="542.0" y2="129.9" stroke="#2a7a16" stroke-width="1.9" stroke-linecap="round"/>
<line x1="542.0" y1="129.9" x2="543.0" y2="135.1" stroke="#6ccc1e" stroke-width="1.9" stroke-linecap="round"/>
<line x1="543.0" y1="135.1" x2="544.0" y2="134.4" stroke="#2a7a16" stroke-width="1.9" stroke-linecap="round"/>
<line x1="544.0" y1="134.4" x2="545.2" y2="138.6" stroke="#6ccc1e" stroke-width="1.9" stroke-linecap="round"/>
<line x1="545.2" y1="138.6" x2="546.5" y2="135.7" stroke="#2a7a16" stroke-width="1.9" stroke-linecap="round"/>
<line x1="546.5" y1="135.7" x2="547.7" y2="138.7" stroke="#6ccc1e" stroke-width="1.9" stroke-linecap="round"/>
<line x1="547.7" y1="138.7" x2="549.0" y2="138.8" stroke="#2a7a16" stroke-width="1.9" stroke-linecap="round"/>
<line x1="549.0" y1="138.8" x2="550.4" y2="134.6" stroke="#2a7a16" stroke-width="1.9" stroke-linecap="round"/>
<line x1="550.4" y1="134.6" x2="551.4" y2="140.6" stroke="#6ccc1e" stroke-width="1.9" stroke-linecap="round"/>
<line x1="551.4" y1="140.6" x2="552.4" y2="142.0" stroke="#6ccc1e" stroke-width="1.9" stroke-linecap="round"/>
<line x1="552.4" y1="142.0" x2="553.5" y2="141.5" stroke="#e0901e" stroke-width="1.9" stroke-linecap="round"/>
<line x1="553.5" y1="141.5" x2="554.7" y2="132.6" stroke="#e0901e" stroke-width="1.9" stroke-linecap="round"/>
<line x1="554.7" y1="132.6" x2="555.8" y2="132.0" stroke="#e0901e" stroke-width="1.9" stroke-linecap="round"/>
<line x1="555.8" y1="132.0" x2="556.8" y2="140.5" stroke="#6ccc1e" stroke-width="1.9" stroke-linecap="round"/>
<line x1="556.8" y1="140.5" x2="557.8" y2="143.4" stroke="#6ccc1e" stroke-width="1.9" stroke-linecap="round"/>
<line x1="557.8" y1="143.4" x2="559.1" y2="133.8" stroke="#e0901e" stroke-width="1.9" stroke-linecap="round"/>
<line x1="559.1" y1="133.8" x2="560.5" y2="120.5" stroke="#e0901e" stroke-width="1.9" stroke-linecap="round"/>
<line x1="560.5" y1="120.5" x2="561.6" y2="129.1" stroke="#6ccc1e" stroke-width="1.9" stroke-linecap="round"/>
<line x1="561.6" y1="129.1" x2="562.8" y2="131.5" stroke="#6ccc1e" stroke-width="1.9" stroke-linecap="round"/>
<line x1="562.8" y1="131.5" x2="563.9" y2="140.0" stroke="#6ccc1e" stroke-width="1.9" stroke-linecap="round"/>
<line x1="563.9" y1="140.0" x2="565.2" y2="138.8" stroke="#e0901e" stroke-width="1.9" stroke-linecap="round"/>
<line x1="565.2" y1="138.8" x2="566.5" y2="132.0" stroke="#e0901e" stroke-width="1.9" stroke-linecap="round"/>
<line x1="566.5" y1="132.0" x2="567.6" y2="129.1" stroke="#e0901e" stroke-width="1.9" stroke-linecap="round"/>
<line x1="567.6" y1="129.1" x2="568.8" y2="118.6" stroke="#e0901e" stroke-width="1.9" stroke-linecap="round"/>
<line x1="568.8" y1="118.6" x2="569.9" y2="114.4" stroke="#e0901e" stroke-width="1.9" stroke-linecap="round"/>
<line x1="569.9" y1="114.4" x2="570.9" y2="106.0" stroke="#ee2a1a" stroke-width="1.9" stroke-linecap="round"/>
<line x1="570.9" y1="106.0" x2="571.9" y2="94.2" stroke="#ee2a1a" stroke-width="1.9" stroke-linecap="round"/>
<line x1="571.9" y1="94.2" x2="573.0" y2="97.3" stroke="#6ccc1e" stroke-width="1.9" stroke-linecap="round"/>
<line x1="573.0" y1="97.3" x2="574.0" y2="96.9" stroke="#2a7a16" stroke-width="1.9" stroke-linecap="round"/>
<line x1="574.0" y1="96.9" x2="574.6" y2="95.7" stroke="#e0901e" stroke-width="1.9" stroke-linecap="round"/>
<line x1="574.6" y1="95.7" x2="575.3" y2="90.9" stroke="#e0901e" stroke-width="1.9" stroke-linecap="round"/>
<line x1="575.3" y1="90.9" x2="576.3" y2="100.8" stroke="#6ccc1e" stroke-width="1.9" stroke-linecap="round"/>
<line x1="576.3" y1="100.8" x2="577.3" y2="106.4" stroke="#6ccc1e" stroke-width="1.9" stroke-linecap="round"/>
<line x1="577.3" y1="106.4" x2="578.6" y2="101.3" stroke="#e0901e" stroke-width="1.9" stroke-linecap="round"/>
<line x1="578.6" y1="101.3" x2="580.0" y2="91.5" stroke="#e0901e" stroke-width="1.9" stroke-linecap="round"/>
<line x1="580.0" y1="91.5" x2="581.0" y2="96.4" stroke="#6ccc1e" stroke-width="1.9" stroke-linecap="round"/>
<line x1="581.0" y1="96.4" x2="582.0" y2="97.6" stroke="#6ccc1e" stroke-width="1.9" stroke-linecap="round"/>
<line x1="582.0" y1="97.6" x2="582.7" y2="97.0" stroke="#e0901e" stroke-width="1.9" stroke-linecap="round"/>
<line x1="582.7" y1="97.0" x2="583.4" y2="93.6" stroke="#e0901e" stroke-width="1.9" stroke-linecap="round"/>
<line x1="583.4" y1="93.6" x2="584.4" y2="102.7" stroke="#6ccc1e" stroke-width="1.9" stroke-linecap="round"/>
<line x1="584.4" y1="102.7" x2="585.4" y2="107.7" stroke="#6ccc1e" stroke-width="1.9" stroke-linecap="round"/>
<line x1="585.4" y1="107.7" x2="586.8" y2="103.3" stroke="#e0901e" stroke-width="1.9" stroke-linecap="round"/>
<line x1="586.8" y1="103.3" x2="588.1" y2="94.9" stroke="#e0901e" stroke-width="1.9" stroke-linecap="round"/>
<line x1="588.1" y1="94.9" x2="589.2" y2="100.6" stroke="#6ccc1e" stroke-width="1.9" stroke-linecap="round"/>
<line x1="589.2" y1="100.6" x2="590.4" y2="98.7" stroke="#2a7a16" stroke-width="1.9" stroke-linecap="round"/>
<line x1="590.4" y1="98.7" x2="591.5" y2="105.0" stroke="#6ccc1e" stroke-width="1.9" stroke-linecap="round"/>
<line x1="591.5" y1="105.0" x2="592.1" y2="115.3" stroke="#6ccc1e" stroke-width="1.9" stroke-linecap="round"/>
<line x1="592.1" y1="115.3" x2="592.8" y2="120.5" stroke="#6ccc1e" stroke-width="1.9" stroke-linecap="round"/>
<line x1="592.8" y1="120.5" x2="593.9" y2="121.2" stroke="#6ccc1e" stroke-width="1.9" stroke-linecap="round"/>
<line x1="593.9" y1="121.2" x2="595.1" y2="115.0" stroke="#2a7a16" stroke-width="1.9" stroke-linecap="round"/>
<line x1="595.1" y1="115.0" x2="596.2" y2="115.8" stroke="#6ccc1e" stroke-width="1.9" stroke-linecap="round"/>
<line x1="596.2" y1="115.8" x2="597.2" y2="119.0" stroke="#6ccc1e" stroke-width="1.9" stroke-linecap="round"/>
<line x1="597.2" y1="119.0" x2="598.2" y2="115.7" stroke="#2a7a16" stroke-width="1.9" stroke-linecap="round"/>
<line x1="598.2" y1="115.7" x2="599.2" y2="120.7" stroke="#6ccc1e" stroke-width="1.9" stroke-linecap="round"/>
<line x1="599.2" y1="120.7" x2="600.2" y2="118.5" stroke="#2a7a16" stroke-width="1.9" stroke-linecap="round"/>
<line x1="600.2" y1="118.5" x2="601.2" y2="120.0" stroke="#6ccc1e" stroke-width="1.9" stroke-linecap="round"/>
<line x1="601.2" y1="120.0" x2="602.2" y2="113.4" stroke="#2a7a16" stroke-width="1.9" stroke-linecap="round"/>
<line x1="602.2" y1="113.4" x2="603.3" y2="117.7" stroke="#6ccc1e" stroke-width="1.9" stroke-linecap="round"/>
<line x1="603.3" y1="117.7" x2="604.3" y2="113.8" stroke="#2a7a16" stroke-width="1.9" stroke-linecap="round"/>
<line x1="604.3" y1="113.8" x2="605.5" y2="116.8" stroke="#6ccc1e" stroke-width="1.9" stroke-linecap="round"/>
<line x1="605.5" y1="116.8" x2="606.6" y2="113.8" stroke="#2a7a16" stroke-width="1.9" stroke-linecap="round"/>
<line x1="606.6" y1="113.8" x2="607.8" y2="118.4" stroke="#6ccc1e" stroke-width="1.9" stroke-linecap="round"/>
<line x1="607.8" y1="118.4" x2="609.0" y2="117.8" stroke="#2a7a16" stroke-width="1.9" stroke-linecap="round"/>
<line x1="609.0" y1="117.8" x2="610.1" y2="117.3" stroke="#e0901e" stroke-width="1.9" stroke-linecap="round"/>
<line x1="610.1" y1="117.3" x2="611.2" y2="110.4" stroke="#e0901e" stroke-width="1.9" stroke-linecap="round"/>
<line x1="611.2" y1="110.4" x2="612.3" y2="109.0" stroke="#e0901e" stroke-width="1.9" stroke-linecap="round"/>
<line x1="612.3" y1="109.0" x2="613.0" y2="112.9" stroke="#6ccc1e" stroke-width="1.9" stroke-linecap="round"/>
<line x1="613.0" y1="112.9" x2="613.7" y2="113.8" stroke="#6ccc1e" stroke-width="1.9" stroke-linecap="round"/>
<line x1="613.7" y1="113.8" x2="614.7" y2="104.7" stroke="#ee2a1a" stroke-width="1.9" stroke-linecap="round"/>
<line x1="614.7" y1="104.7" x2="615.7" y2="92.2" stroke="#ee2a1a" stroke-width="1.9" stroke-linecap="round"/>
<line x1="615.7" y1="92.2" x2="616.9" y2="101.1" stroke="#6ccc1e" stroke-width="1.9" stroke-linecap="round"/>
<line x1="616.9" y1="101.1" x2="618.0" y2="104.8" stroke="#6ccc1e" stroke-width="1.9" stroke-linecap="round"/>
<line x1="618.0" y1="104.8" x2="619.2" y2="115.4" stroke="#6ccc1e" stroke-width="1.9" stroke-linecap="round"/>
<line x1="619.2" y1="115.4" x2="620.4" y2="121.2" stroke="#6ccc1e" stroke-width="1.9" stroke-linecap="round"/>
<line x1="620.4" y1="121.2" x2="621.4" y2="121.5" stroke="#6ccc1e" stroke-width="1.9" stroke-linecap="round"/>
<line x1="621.4" y1="121.5" x2="622.4" y2="117.3" stroke="#2a7a16" stroke-width="1.9" stroke-linecap="round"/>
<line x1="622.4" y1="117.3" x2="623.5" y2="119.3" stroke="#6ccc1e" stroke-width="1.9" stroke-linecap="round"/>
<line x1="623.5" y1="119.3" x2="624.5" y2="114.7" stroke="#2a7a16" stroke-width="1.9" stroke-linecap="round"/>
<line x1="624.5" y1="114.7" x2="625.5" y2="115.5" stroke="#6ccc1e" stroke-width="1.9" stroke-linecap="round"/>
<line x1="625.5" y1="115.5" x2="626.6" y2="119.9" stroke="#6ccc1e" stroke-width="1.9" stroke-linecap="round"/>
<line x1="626.6" y1="119.9" x2="627.6" y2="118.7" stroke="#2a7a16" stroke-width="1.9" stroke-linecap="round"/>
<line x1="627.6" y1="118.7" x2="628.7" y2="126.9" stroke="#6ccc1e" stroke-width="1.9" stroke-linecap="round"/>
<line x1="628.7" y1="126.9" x2="629.8" y2="127.5" stroke="#6ccc1e" stroke-width="1.9" stroke-linecap="round"/>
<line x1="629.8" y1="127.5" x2="630.9" y2="129.9" stroke="#6ccc1e" stroke-width="1.9" stroke-linecap="round"/>
<line x1="630.9" y1="129.9" x2="632.0" y2="127.2" stroke="#2a7a16" stroke-width="1.9" stroke-linecap="round"/>
<line x1="632.0" y1="127.2" x2="633.1" y2="129.7" stroke="#6ccc1e" stroke-width="1.9" stroke-linecap="round"/>
<line x1="633.1" y1="129.7" x2="634.2" y2="134.6" stroke="#6ccc1e" stroke-width="1.9" stroke-linecap="round"/>
<line x1="634.2" y1="134.6" x2="635.3" y2="133.6" stroke="#2a7a16" stroke-width="1.9" stroke-linecap="round"/>
<line x1="635.3" y1="133.6" x2="636.4" y2="138.5" stroke="#6ccc1e" stroke-width="1.9" stroke-linecap="round"/>
<line x1="636.4" y1="138.5" x2="637.5" y2="144.5" stroke="#6ccc1e" stroke-width="1.9" stroke-linecap="round"/>
<line x1="637.5" y1="144.5" x2="638.6" y2="144.5" stroke="#2a7a16" stroke-width="1.9" stroke-linecap="round"/>
<line x1="638.6" y1="144.5" x2="639.7" y2="151.6" stroke="#6ccc1e" stroke-width="1.9" stroke-linecap="round"/>
<line x1="639.7" y1="151.6" x2="640.8" y2="156.5" stroke="#6ccc1e" stroke-width="1.9" stroke-linecap="round"/>
<line x1="640.8" y1="156.5" x2="641.9" y2="153.3" stroke="#2a7a16" stroke-width="1.9" stroke-linecap="round"/>
<line x1="641.9" y1="153.3" x2="643.0" y2="159.5" stroke="#6ccc1e" stroke-width="1.9" stroke-linecap="round"/>
<line x1="643.0" y1="159.5" x2="644.1" y2="159.3" stroke="#2a7a16" stroke-width="1.9" stroke-linecap="round"/>
<line x1="644.1" y1="159.3" x2="645.2" y2="156.1" stroke="#e0901e" stroke-width="1.9" stroke-linecap="round"/>
<line x1="645.2" y1="156.1" x2="646.3" y2="148.2" stroke="#e0901e" stroke-width="1.9" stroke-linecap="round"/>
<line x1="646.3" y1="148.2" x2="647.4" y2="145.0" stroke="#e0901e" stroke-width="1.9" stroke-linecap="round"/>
<line x1="647.4" y1="145.0" x2="648.5" y2="142.6" stroke="#e0901e" stroke-width="1.9" stroke-linecap="round"/>
<line x1="648.5" y1="142.6" x2="649.5" y2="134.4" stroke="#e0901e" stroke-width="1.9" stroke-linecap="round"/>
<line x1="649.5" y1="134.4" x2="650.6" y2="131.9" stroke="#e0901e" stroke-width="1.9" stroke-linecap="round"/>
<line x1="650.6" y1="131.9" x2="651.7" y2="130.3" stroke="#e0901e" stroke-width="1.9" stroke-linecap="round"/>
<line x1="651.7" y1="130.3" x2="652.8" y2="123.2" stroke="#e0901e" stroke-width="1.9" stroke-linecap="round"/>
<line x1="652.8" y1="123.2" x2="653.9" y2="122.7" stroke="#2a7a16" stroke-width="1.9" stroke-linecap="round"/>
<line x1="653.9" y1="122.7" x2="655.0" y2="117.4" stroke="#2a7a16" stroke-width="1.9" stroke-linecap="round"/>
<line x1="655.0" y1="117.4" x2="656.1" y2="116.6" stroke="#2a7a16" stroke-width="1.9" stroke-linecap="round"/>
<line x1="656.1" y1="116.6" x2="657.2" y2="121.2" stroke="#6ccc1e" stroke-width="1.9" stroke-linecap="round"/>
<line x1="657.2" y1="121.2" x2="658.3" y2="117.7" stroke="#2a7a16" stroke-width="1.9" stroke-linecap="round"/>
<line x1="658.3" y1="117.7" x2="659.4" y2="123.2" stroke="#6ccc1e" stroke-width="1.9" stroke-linecap="round"/>
<line x1="659.4" y1="123.2" x2="660.5" y2="123.2" stroke="#2a7a16" stroke-width="1.9" stroke-linecap="round"/>
<line x1="660.5" y1="123.2" x2="661.6" y2="127.3" stroke="#6ccc1e" stroke-width="1.9" stroke-linecap="round"/>
<line x1="661.6" y1="127.3" x2="662.7" y2="125.4" stroke="#2a7a16" stroke-width="1.9" stroke-linecap="round"/>
<line x1="662.7" y1="125.4" x2="663.8" y2="128.6" stroke="#6ccc1e" stroke-width="1.9" stroke-linecap="round"/>
<line x1="663.8" y1="128.6" x2="664.9" y2="128.7" stroke="#2a7a16" stroke-width="1.9" stroke-linecap="round"/>
<line x1="664.9" y1="128.7" x2="666.0" y2="121.3" stroke="#2a7a16" stroke-width="1.9" stroke-linecap="round"/>
<line x1="666.0" y1="121.3" x2="667.1" y2="122.1" stroke="#6ccc1e" stroke-width="1.9" stroke-linecap="round"/>
<line x1="667.1" y1="122.1" x2="668.2" y2="126.3" stroke="#6ccc1e" stroke-width="1.9" stroke-linecap="round"/>
<line x1="668.2" y1="126.3" x2="669.2" y2="122.5" stroke="#2a7a16" stroke-width="1.9" stroke-linecap="round"/>
<line x1="669.2" y1="122.5" x2="670.3" y2="126.5" stroke="#6ccc1e" stroke-width="1.9" stroke-linecap="round"/>
<line x1="670.3" y1="126.5" x2="671.4" y2="119.0" stroke="#e0901e" stroke-width="1.9" stroke-linecap="round"/>
<line x1="671.4" y1="119.0" x2="672.5" y2="107.8" stroke="#e0901e" stroke-width="1.9" stroke-linecap="round"/>
<line x1="672.5" y1="107.8" x2="673.9" y2="113.6" stroke="#6ccc1e" stroke-width="1.9" stroke-linecap="round"/>
<line x1="673.9" y1="113.6" x2="675.2" y2="115.5" stroke="#6ccc1e" stroke-width="1.9" stroke-linecap="round"/>
<line x1="675.2" y1="115.5" x2="676.6" y2="109.5" stroke="#e0901e" stroke-width="1.9" stroke-linecap="round"/>
<line x1="676.6" y1="109.5" x2="678.0" y2="100.2" stroke="#e0901e" stroke-width="1.9" stroke-linecap="round"/>
<line x1="678.0" y1="100.2" x2="679.1" y2="108.3" stroke="#6ccc1e" stroke-width="1.9" stroke-linecap="round"/>
<line x1="679.1" y1="108.3" x2="680.2" y2="111.1" stroke="#6ccc1e" stroke-width="1.9" stroke-linecap="round"/>
<line x1="680.2" y1="111.1" x2="681.3" y2="107.5" stroke="#e0901e" stroke-width="1.9" stroke-linecap="round"/>
<line x1="681.3" y1="107.5" x2="682.4" y2="96.7" stroke="#e0901e" stroke-width="1.9" stroke-linecap="round"/>
<line x1="682.4" y1="96.7" x2="683.5" y2="95.3" stroke="#e0901e" stroke-width="1.9" stroke-linecap="round"/>
<line x1="683.5" y1="95.3" x2="684.6" y2="85.7" stroke="#e0901e" stroke-width="1.9" stroke-linecap="round"/>
<line x1="684.6" y1="85.7" x2="685.7" y2="81.6" stroke="#e0901e" stroke-width="1.9" stroke-linecap="round"/>
<line x1="685.7" y1="81.6" x2="686.8" y2="88.6" stroke="#6ccc1e" stroke-width="1.9" stroke-linecap="round"/>
<line x1="686.8" y1="88.6" x2="687.8" y2="90.3" stroke="#6ccc1e" stroke-width="1.9" stroke-linecap="round"/>
<line x1="687.8" y1="90.3" x2="688.9" y2="89.5" stroke="#e0901e" stroke-width="1.9" stroke-linecap="round"/>
<line x1="688.9" y1="89.5" x2="690.0" y2="79.9" stroke="#e0901e" stroke-width="1.9" stroke-linecap="round"/>
<line x1="690.0" y1="79.9" x2="691.1" y2="81.5" stroke="#e0901e" stroke-width="1.9" stroke-linecap="round"/>
<line x1="691.1" y1="81.5" x2="692.2" y2="75.0" stroke="#e0901e" stroke-width="1.9" stroke-linecap="round"/>
<line x1="692.2" y1="75.0" x2="693.3" y2="81.0" stroke="#6ccc1e" stroke-width="1.9" stroke-linecap="round"/>
<line x1="693.3" y1="81.0" x2="694.4" y2="79.0" stroke="#2a7a16" stroke-width="1.9" stroke-linecap="round"/>
<line x1="694.4" y1="79.0" x2="695.5" y2="84.9" stroke="#6ccc1e" stroke-width="1.9" stroke-linecap="round"/>
<line x1="695.5" y1="84.9" x2="696.6" y2="85.7" stroke="#6ccc1e" stroke-width="1.9" stroke-linecap="round"/>
<line x1="696.6" y1="85.7" x2="697.7" y2="80.8" stroke="#2a7a16" stroke-width="1.9" stroke-linecap="round"/>
<line x1="697.7" y1="80.8" x2="698.8" y2="84.1" stroke="#6ccc1e" stroke-width="1.9" stroke-linecap="round"/>
<line x1="698.8" y1="84.1" x2="699.9" y2="79.8" stroke="#2a7a16" stroke-width="1.9" stroke-linecap="round"/>
<line x1="699.9" y1="79.8" x2="701.0" y2="81.8" stroke="#6ccc1e" stroke-width="1.9" stroke-linecap="round"/>
<line x1="701.0" y1="81.8" x2="702.1" y2="79.4" stroke="#2a7a16" stroke-width="1.9" stroke-linecap="round"/>
<line x1="702.1" y1="79.4" x2="703.2" y2="79.7" stroke="#6ccc1e" stroke-width="1.9" stroke-linecap="round"/>
<line x1="703.2" y1="79.7" x2="704.3" y2="74.5" stroke="#2a7a16" stroke-width="1.9" stroke-linecap="round"/>
<line x1="704.3" y1="74.5" x2="705.3" y2="77.3" stroke="#6ccc1e" stroke-width="1.9" stroke-linecap="round"/>
<line x1="705.3" y1="77.3" x2="706.4" y2="70.3" stroke="#2a7a16" stroke-width="1.9" stroke-linecap="round"/>
<line x1="706.4" y1="70.3" x2="707.5" y2="71.7" stroke="#6ccc1e" stroke-width="1.9" stroke-linecap="round"/>
<line x1="707.5" y1="71.7" x2="708.6" y2="75.5" stroke="#6ccc1e" stroke-width="1.9" stroke-linecap="round"/>
<line x1="708.6" y1="75.5" x2="709.7" y2="75.0" stroke="#2a7a16" stroke-width="1.9" stroke-linecap="round"/>
<line x1="709.7" y1="75.0" x2="710.8" y2="70.2" stroke="#e0901e" stroke-width="1.9" stroke-linecap="round"/>
<line x1="710.8" y1="70.2" x2="711.9" y2="56.7" stroke="#e0901e" stroke-width="1.9" stroke-linecap="round"/>
<line x1="711.9" y1="56.7" x2="713.0" y2="52.0" stroke="#e0901e" stroke-width="1.9" stroke-linecap="round"/>
<line x1="713.0" y1="52.0" x2="713.5" y2="53.5" stroke="#e0901e" stroke-width="1.9" stroke-linecap="round"/>
<line x1="713.5" y1="53.5" x2="714.1" y2="49.2" stroke="#e0901e" stroke-width="1.9" stroke-linecap="round"/>
<line x1="714.1" y1="49.2" x2="715.2" y2="51.2" stroke="#6ccc1e" stroke-width="1.9" stroke-linecap="round"/>
<line x1="715.2" y1="51.2" x2="716.3" y2="49.2" stroke="#2a7a16" stroke-width="1.9" stroke-linecap="round"/>
<line x1="423.3" y1="98.1" x2="712" y2="131.6" stroke="#9ccf34" stroke-width="2.3"/>
<line x1="401" y1="95.7" x2="423.3" y2="98.1" stroke="#1f6e3a" stroke-width="2.6"/>
<line x1="711" y1="131.5" x2="716.5" y2="131.5" stroke="#1f6e3a" stroke-width="2.6"/>
<polyline points="402.0,226.0 404.0,233.0 405.0,234.3 406.0,234.9 407.0,234.6 408.0,235.0 409.0,235.0 410.0,234.0 411.0,233.9 412.0,235.4 413.0,234.3 414.0,234.3 415.0,235.7 416.0,234.7 417.0,235.4 418.0,234.7 419.0,235.0 420.0,234.1 421.0,235.0 422.0,235.4 423.0,234.8 424.0,235.2 425.0,235.1 426.0,234.0 427.0,235.2 428.0,234.9 429.0,234.4 430.0,233.9 431.0,235.4 432.0,234.7 433.0,235.1 434.0,235.4 435.0,235.1 436.0,235.5 437.0,234.5 438.0,235.3 439.0,234.6 440.0,235.5 441.0,235.4 442.0,234.0 443.0,234.1 444.0,234.2 445.0,235.6 446.0,234.6 447.0,234.9 448.0,234.4 449.0,234.7 450.0,234.5 451.0,234.4 452.0,234.9 453.0,234.9 454.0,235.4 455.0,235.0 456.0,235.5 457.0,235.3 458.0,235.6 459.0,235.0 460.0,234.1 461.0,235.3 462.0,235.5 463.0,235.4 464.0,234.8 465.0,235.1 466.0,234.2 467.0,235.3 468.0,234.8 469.0,234.3 470.0,233.9 471.0,235.3 472.0,235.5 473.0,233.9 474.0,235.2 475.0,234.5 476.0,234.0 477.0,234.3 478.0,235.1 479.0,235.3 480.0,233.8 481.0,234.9 482.0,233.8 483.0,235.0 484.0,234.3 485.0,235.3 486.0,235.5 487.0,234.6 488.0,235.5 489.0,234.3 490.0,233.9 491.0,234.8 492.0,233.8 493.0,234.1 494.0,234.5 495.0,234.8 496.0,234.0 497.0,233.8 498.0,235.3 499.0,234.3 500.0,235.4 501.0,235.3 502.0,234.4 503.0,234.5 504.0,234.6 505.0,234.9 506.0,234.8 507.0,234.7 508.0,234.8 509.0,235.4 510.0,234.6 511.0,234.5 512.0,235.0 513.0,234.1 514.0,234.2 515.0,235.4 516.0,234.6 517.0,234.7 518.0,233.7 519.0,234.4 520.0,234.7 521.0,233.7 522.0,234.8 523.0,234.8 524.0,233.8 525.0,234.8 526.0,234.5 527.0,234.9 528.0,234.3 529.0,234.9 530.0,235.0 531.0,233.7 532.0,233.8 533.0,234.9 534.0,235.4 535.0,234.1 536.0,234.5 537.0,234.7 538.0,234.2 539.0,234.3 540.0,234.2 541.0,234.3 542.0,234.7 543.0,234.2 544.0,234.3 545.0,235.0 546.0,233.7 547.0,234.6 548.0,234.9 549.0,234.2 550.0,234.0 551.0,235.1 552.0,234.0 553.0,233.9 554.0,234.4 555.0,234.9 556.0,233.8 557.0,234.2 558.0,234.2 559.0,235.1 560.0,234.4 561.0,235.1 562.0,233.9 563.0,234.2 564.0,234.8 565.0,235.2 566.0,234.4 567.0,234.0 568.0,233.8 569.0,234.5 570.0,233.9 571.0,235.0 572.0,235.1 573.0,233.9 574.0,234.1 575.0,235.0 576.0,234.7 577.0,235.0 578.0,234.2 579.0,233.8 580.0,234.1 581.0,235.0 582.0,234.0 583.0,234.2 584.0,234.3 585.0,234.3 586.0,234.3 587.0,235.2 588.0,233.8 589.0,233.5 590.0,235.2 591.0,235.1 592.0,235.3 593.0,234.3 594.0,235.2 595.0,235.2 596.0,233.9 597.0,234.9 598.0,235.0 599.0,234.7 600.0,234.4 601.0,234.0 602.0,234.1 603.0,233.9 604.0,233.6 605.0,234.6 606.0,234.0 607.0,235.0 608.0,233.6 609.0,235.1 610.0,234.7 611.0,235.1 612.0,235.1 613.0,235.1 614.0,234.5 615.0,233.5 616.0,234.8 617.0,233.8 618.0,234.0 619.0,234.7 620.0,234.4 621.0,234.2 622.0,235.2 623.0,234.6 624.0,234.1 625.0,233.9 626.0,235.0 627.0,234.3 628.0,234.9 629.0,234.1 630.0,233.8 631.0,234.4 632.0,234.9 633.0,233.8 634.0,234.9 635.0,235.1 636.0,234.9 637.0,234.9 638.0,233.4 639.0,234.6 640.0,235.0 641.0,233.5 642.0,233.9 643.0,233.9 644.0,234.4 645.0,234.2 646.0,234.3 647.0,234.8 648.0,233.4 649.0,233.5 650.0,233.6 651.0,233.6 652.0,233.5 653.0,235.2 654.0,234.9 655.0,233.6 656.0,234.3 657.0,234.0 658.0,234.0 659.0,234.0 660.0,234.6 661.0,234.4 662.0,234.0 663.0,233.7 664.0,234.0 665.0,233.6 666.0,234.4 667.0,234.7 668.0,234.1 669.0,233.5 670.0,233.7 671.0,234.0 672.0,234.5 673.0,234.8 674.0,234.0 675.0,234.8 676.0,234.5 677.0,234.1 678.0,234.0 679.0,234.2 680.0,234.6 681.0,234.1 682.0,234.6 683.0,234.2 684.0,233.8 685.0,234.3 686.0,234.6 687.0,233.5 688.0,234.1 689.0,234.1 690.0,234.9 691.0,235.0 692.0,234.0 693.0,234.9 694.0,234.7 695.0,233.8 696.0,234.2 697.0,233.5 698.0,234.8 699.0,234.5 700.0,234.9 701.0,234.7 702.0,234.5 703.0,234.6 704.0,234.3 705.0,233.5 706.0,234.4 707.0,233.3 708.0,233.6 709.0,234.7 710.0,233.4 711.0,233.5 712.0,233.5" stroke="#4040e0" stroke-width="1.1" fill="none"/>
<path d="M401.7 296.7 L403.0 278.3 L404.6 266.7 L406.3 255.3 L408.1 255.3 L409.9 255.7 L411.7 255.0 L413.4 254.6 L415.0 254.3 L416.7 254.1 L418.3 253.2 L420.0 253.3 L422.1 255.0 L424.2 256.7 L426.1 256.0 L428.1 255.4 L430.0 254.2 L431.7 254.1 L433.3 254.9 L435.0 255.1 L436.6 256.6 L438.3 256.7 L440.0 256.7 L441.6 255.5 L443.3 255.8 L445.0 257.0 L446.6 257.6 L448.3 257.5 L449.8 257.9 L451.3 258.0 L452.8 257.5 L454.3 257.5 L455.8 258.3 L457.3 262.1 L458.8 265.8 L461.7 262.5 L463.4 261.5 L465.0 261.4 L466.7 261.1 L468.3 260.5 L470.0 260.8 L471.7 260.4 L473.3 260.1 L475.0 260.3 L476.6 259.5 L478.3 259.2 L480.0 258.1 L481.7 256.7 L483.2 256.4 L484.7 256.4 L486.2 255.8 L487.7 255.3 L489.2 255.3 L490.7 256.4 L492.2 256.7 L493.8 256.9 L495.3 257.1 L496.8 256.9 L498.3 257.5 L500.0 257.5 L501.6 258.0 L503.3 258.1 L505.0 259.5 L506.6 259.4 L508.3 260.0 L510.0 259.7 L511.6 258.2 L513.3 258.2 L515.0 256.7 L516.7 257.7 L518.3 257.0 L520.0 258.2 L521.7 258.0 L523.3 259.2 L525.0 258.8 L526.7 259.7 L528.3 259.1 L530.0 259.5 L531.7 258.6 L533.3 259.0 L535.0 258.9 L536.7 257.8 L538.3 257.3 L540.0 257.5 L541.5 257.2 L543.0 258.0 L544.5 257.7 L546.0 256.8 L547.5 256.9 L549.0 256.6 L550.5 256.5 L552.0 257.5 L553.5 256.6 L555.0 257.0 L556.7 257.4 L558.3 257.6 L560.0 257.6 L561.7 258.7 L563.3 258.2 L565.0 259.0 L566.7 259.5 L568.3 259.1 L570.0 260.0 L571.0 268.0 L572.5 268.0 L574.0 267.8 L575.5 267.9 L577.0 269.0 L578.5 268.8 L580.0 268.5 L581.7 268.0 L583.3 268.5 L585.0 267.3 L586.7 267.4 L588.3 267.7 L590.0 267.0 L591.7 266.2 L593.3 264.4 L595.0 264.0 L596.6 264.5 L598.2 263.3 L599.8 263.2 L601.4 263.8 L603.0 263.3 L604.8 262.9 L606.5 262.6 L608.2 262.1 L610.0 262.5 L611.7 262.8 L613.3 264.3 L615.0 265.0 L617.0 270.0 L618.5 266.6 L620.0 264.0 L621.7 263.5 L623.3 262.5 L625.0 262.0 L626.7 260.8 L628.3 260.3 L630.0 258.5 L631.7 257.4 L633.3 256.7 L635.0 255.0 L636.5 255.0 L638.0 255.4 L639.5 257.0 L641.0 257.3 L642.5 257.0 L644.0 257.3 L645.5 258.6 L647.0 258.7 L648.5 259.7 L650.1 259.0 L651.6 260.5 L653.1 260.7 L654.7 260.7 L656.2 260.8 L657.7 260.8 L659.3 261.0 L660.8 262.7 L662.3 262.1 L663.9 263.1 L665.4 262.8 L666.9 264.0 L668.5 264.1 L670.0 264.3 L671.5 264.6 L673.0 265.1 L674.5 266.5 L676.0 266.2 L677.5 267.0 L679.0 268.1 L680.5 269.1 L682.0 269.4 L683.5 269.5 L685.0 271.1 L686.5 270.7 L688.0 271.7 L689.5 271.3 L691.1 272.0 L692.6 272.6 L694.1 272.3 L695.7 272.8 L697.2 273.4 L698.7 274.0 L700.3 273.7 L701.8 274.3 L703.3 275.4 L704.9 275.8 L706.4 275.7 L707.9 276.0 L709.5 276.2 L711.0 276.4 L712.7 277.1 L714.3 278.1 L716.0 280.0" stroke="#4a9a3a" stroke-width="1.1" fill="none"/>
</svg>
<div class="t" style="left:367.5px;width:400px;text-align:center;top:43.6px;font-size:9.3px;line-height:9.3px;color:#3d6b4a;font-weight:normal;">GF 33/75</div>
<div class="t" style="left:391.0px;top:102.2px;font-size:9.5px;line-height:9.5px;color:#e8202a;font-weight:normal;">10</div>
<div class="t" style="left:391.0px;top:161.6px;font-size:9.5px;line-height:9.5px;color:#e8202a;font-weight:normal;">20</div>
<div class="t" style="left:402.5px;top:85.4px;font-size:9.5px;line-height:9.5px;color:#3d6b4a;font-weight:normal;">210 bar</div>
<div class="t" style="left:402.5px;top:97.0px;font-size:9.5px;line-height:9.5px;color:#3d6b4a;font-weight:normal;">EAN33</div>
<div class="t" style="left:221.3px;width:400px;text-align:center;top:159.4px;font-size:9.5px;line-height:9.5px;color:#8b1a38;font-weight:normal;">18.3</div>
<div class="t" style="left:292.2px;width:400px;text-align:center;top:153.4px;font-size:9.5px;line-height:9.5px;color:#8b1a38;font-weight:normal;">17.3</div>
<div class="t" style="left:338.5px;width:400px;text-align:center;top:146.8px;font-size:9.5px;line-height:9.5px;color:#8b1a38;font-weight:normal;">16.1</div>
<div class="t" style="left:359.3px;width:400px;text-align:center;top:146.8px;font-size:9.5px;line-height:9.5px;color:#8b1a38;font-weight:normal;">16.0</div>
<div class="t" style="left:407.6px;width:400px;text-align:center;top:123.3px;font-size:9.5px;line-height:9.5px;color:#8b1a38;font-weight:normal;">12.3</div>
<div class="t" style="left:446.5px;width:400px;text-align:center;top:161.1px;font-size:9.5px;line-height:9.5px;color:#8b1a38;font-weight:normal;">18.7</div>
<div class="t" style="left:259.6px;width:400px;text-align:center;top:98.8px;font-size:9.5px;line-height:9.5px;color:#f08a8a;font-weight:normal;text-shadow:0 0 1px #fff,0 0 1px #fff,0 0 2px #fff,0 0 2px #fff">10.1</div>
<div class="t" style="left:310.4px;width:400px;text-align:center;top:116.3px;font-size:9.5px;line-height:9.5px;color:#f08a8a;font-weight:normal;text-shadow:0 0 1px #fff,0 0 1px #fff,0 0 2px #fff,0 0 2px #fff">12.7</div>
<div class="t" style="left:333.3px;width:400px;text-align:center;top:119.0px;font-size:9.5px;line-height:9.5px;color:#f08a8a;font-weight:normal;text-shadow:0 0 1px #fff,0 0 1px #fff,0 0 2px #fff,0 0 2px #fff">13.1</div>
<div class="t" style="left:380.7px;width:400px;text-align:center;top:81.5px;font-size:9.5px;line-height:9.5px;color:#f08a8a;font-weight:normal;text-shadow:0 0 1px #fff,0 0 1px #fff,0 0 2px #fff,0 0 2px #fff">6.8</div>
<div class="t" style="left:417.0px;width:400px;text-align:center;top:82.9px;font-size:9.5px;line-height:9.5px;color:#f08a8a;font-weight:normal;text-shadow:0 0 1px #fff,0 0 1px #fff,0 0 2px #fff,0 0 2px #fff">7.1</div>
<div class="t" style="left:689.5px;top:132.7px;font-size:9.5px;line-height:9.5px;color:#3d6b4a;font-weight:normal;">70 bar</div>
<div class="t" style="left:719.7px;top:116.8px;font-size:9.3px;line-height:9.3px;color:#4646c8;font-weight:normal;">12.7m</div>
<div class="t" style="left:402.0px;top:226.3px;font-size:9.3px;line-height:9.3px;color:#3a3ad4;font-weight:normal;">23.6°C</div>
<div class="t" style="left:411.2px;top:235.1px;font-size:9.3px;line-height:9.3px;color:#3a3ad4;font-weight:normal;">21.6°C</div>
<div class="t" style="left:434.7px;top:235.6px;font-size:9.3px;line-height:9.3px;color:#3a3ad4;font-weight:normal;">21.2°C</div>
<div class="t" style="left:454.5px;top:236.6px;font-size:9.3px;line-height:9.3px;color:#3a3ad4;font-weight:normal;">20.8°C</div>
<div class="t" style="left:477.3px;top:235.6px;font-size:9.3px;line-height:9.3px;color:#3a3ad4;font-weight:normal;">21.2°C</div>
<div class="t" style="left:499.7px;top:233.6px;font-size:9.3px;line-height:9.3px;color:#3a3ad4;font-weight:normal;">21.6°C</div>
<div class="t" style="left:521.0px;top:235.6px;font-size:9.3px;line-height:9.3px;color:#3a3ad4;font-weight:normal;">21.2°C</div>
<div class="t" style="left:546.5px;top:231.6px;font-size:9.3px;line-height:9.3px;color:#3a3ad4;font-weight:normal;">22.0°C</div>
<div class="t" style="left:565.8px;top:235.6px;font-size:9.3px;line-height:9.3px;color:#3a3ad4;font-weight:normal;">21.2°C</div>
<div class="t" style="left:589.5px;top:233.8px;font-size:9.3px;line-height:9.3px;color:#3a3ad4;font-weight:normal;">21.6°C</div>
<div class="t" style="left:612.7px;top:235.6px;font-size:9.3px;line-height:9.3px;color:#3a3ad4;font-weight:normal;">21.2°C</div>
<div class="t" style="left:635.5px;top:234.1px;font-size:9.3px;line-height:9.3px;color:#3a3ad4;font-weight:normal;">21.6°C</div>
<div class="t" style="left:696.3px;top:232.1px;font-size:9.3px;line-height:9.3px;color:#3a3ad4;font-weight:normal;">22.0°C</div>
<div class="t" style="left:247.5px;width:400px;text-align:center;top:300.1px;font-size:9.7px;line-height:9.7px;color:#1a1aff;font-weight:normal;text-shadow:0 0 1px #fff">10</div>
<div class="t" style="left:334.9px;width:400px;text-align:center;top:300.1px;font-size:9.7px;line-height:9.7px;color:#1a1aff;font-weight:normal;text-shadow:0 0 1px #fff">30</div>
<div class="t" style="left:422.0px;width:400px;text-align:center;top:300.1px;font-size:9.7px;line-height:9.7px;color:#1a1aff;font-weight:normal;text-shadow:0 0 1px #fff">50</div>
<div class="t" style="left:510.0px;width:400px;text-align:center;top:300.1px;font-size:9.7px;line-height:9.7px;color:#1a1aff;font-weight:normal;text-shadow:0 0 1px #fff">70</div>
<div class="t" style="right:20.5px;top:246.7px;font-size:7.5px;line-height:7.5px;color:#2a2a2a;font-weight:normal;">1</div>
<div class="t" style="right:20.5px;top:257.9px;font-size:7.5px;line-height:7.5px;color:#2a2a2a;font-weight:normal;">0.75</div>
<div class="t" style="right:20.5px;top:269.7px;font-size:7.5px;line-height:7.5px;color:#2a2a2a;font-weight:normal;">0.5</div>
<div class="t" style="right:20.5px;top:281.7px;font-size:7.5px;line-height:7.5px;color:#2a2a2a;font-weight:normal;">0.25</div>
<div class="t" style="right:20.5px;top:292.7px;font-size:7.5px;line-height:7.5px;color:#2a2a2a;font-weight:normal;">0</div>
<div class="t" style="left:402.2px;top:306.0px;font-size:9.7px;line-height:9.7px;color:#237523;font-weight:normal;">Uwatec Galileo Sol (f4917b6c) (#1 of 3)</div>
<div style="position:absolute;left:627px;top:175.5px;width:117px;height:109.0px;box-sizing:border-box;background:rgba(37,37,32,0.75);border-radius:5px"></div>
<div style="position:absolute;left:628px;top:188px;width:11px;height:6.800000000000011px;box-sizing:border-box;background:#f21a10"></div>
<div style="position:absolute;left:628px;top:194.8px;width:11px;height:11.199999999999989px;box-sizing:border-box;background:#f6f6ef"></div>
<div style="position:absolute;left:628px;top:206px;width:11px;height:1px;box-sizing:border-box;background:#3a3a36"></div>
<div style="position:absolute;left:628px;top:207px;width:11px;height:5px;box-sizing:border-box;background:#f6f6ef"></div>
<div style="position:absolute;left:628px;top:212px;width:11px;height:13.5px;box-sizing:border-box;background:#5ec41c"></div>
<div style="position:absolute;left:628px;top:216.5px;width:11px;height:1.5px;box-sizing:border-box;background:#3f9a18"></div>
<div style="position:absolute;left:628px;top:225.5px;width:11px;height:3.5px;box-sizing:border-box;background:#2d6a1c"></div>
<div class="t" style="left:485.9px;width:400px;text-align:center;top:177.2px;font-size:8.3px;line-height:8.3px;color:#fff;font-weight:bold;">Information</div>
<div class="t" style="left:639.5px;top:190.3px;font-size:8.9px;line-height:8.9px;color:#f4f4f0;font-weight:normal;">@: 6:08</div>
<div class="t" style="left:639.5px;top:202.1px;font-size:8.9px;line-height:8.9px;color:#f4f4f0;font-weight:normal;">D: 29.0m</div>
<div class="t" style="left:639.5px;top:213.9px;font-size:8.9px;line-height:8.9px;color:#f4f4f0;font-weight:normal;">P: 160bar</div>
<div class="t" style="left:639.5px;top:225.7px;font-size:8.9px;line-height:8.9px;color:#f4f4f0;font-weight:normal;">T: 12.8°C</div>
<div class="t" style="left:639.5px;top:237.5px;font-size:8.9px;line-height:8.9px;color:#f4f4f0;font-weight:normal;">V: 0.9m/min</div>
<div class="t" style="left:639.5px;top:249.3px;font-size:8.9px;line-height:8.9px;color:#f4f4f0;font-weight:normal;">pO<sub style="font-size:6px;vertical-align:0">2</sub>: 1.20bar</div>
<div class="t" style="left:639.5px;top:261.1px;font-size:8.9px;line-height:8.9px;color:#f4f4f0;font-weight:normal;">RBT: 13min</div>
<div class="t" style="left:639.5px;top:272.9px;font-size:8.9px;line-height:8.9px;color:#f4f4f0;font-weight:normal;">mean depth to here 17.7m</div>
<div style="position:absolute;left:5px;top:317.3px;width:514px;height:274.7px;box-sizing:border-box;background:#fcfcfc;border:1px solid #3daee9"></div>
<div style="position:absolute;left:6px;top:318px;width:512px;height:18px;box-sizing:border-box;background:#eff0f1;border-bottom:1px solid #dcdddd"></div>
<div style="position:absolute;left:53.5px;top:319px;width:1.0px;height:16px;box-sizing:border-box;background:#d5d6d7"></div>
<div style="position:absolute;left:153.9px;top:319px;width:1.0px;height:16px;box-sizing:border-box;background:#d5d6d7"></div>
<div style="position:absolute;left:219.5px;top:319px;width:1.0px;height:16px;box-sizing:border-box;background:#d5d6d7"></div>
<div style="position:absolute;left:257.3px;top:319px;width:1.0px;height:16px;box-sizing:border-box;background:#d5d6d7"></div>
<div style="position:absolute;left:306.7px;top:319px;width:1.0px;height:16px;box-sizing:border-box;background:#d5d6d7"></div>
<div class="t" style="left:9.5px;top:322.7px;font-size:9.5px;line-height:9.5px;color:#31363b;font-weight:normal;">#</div>
<div class="t" style="left:58.2px;top:322.7px;font-size:9.5px;line-height:9.5px;color:#31363b;font-weight:normal;">Date</div>
<div class="t" style="left:157.6px;top:322.7px;font-size:9.5px;line-height:9.5px;color:#31363b;font-weight:normal;">Rating</div>
<div class="t" style="right:496.7px;top:322.7px;font-size:9.5px;line-height:9.5px;color:#31363b;font-weight:normal;">Depth</div>
<div class="t" style="left:264.8px;top:322.7px;font-size:9.5px;line-height:9.5px;color:#31363b;font-weight:normal;">Duration</div>
<div class="t" style="left:310.2px;top:322.7px;font-size:9.5px;line-height:9.5px;color:#31363b;font-weight:normal;">Location</div>
<div style="position:absolute;left:11px;top:337px;width:1px;height:255px;box-sizing:border-box;border-left:1px dotted #c8c8c8"></div>
<div style="position:absolute;left:25px;top:370px;width:1px;height:48px;box-sizing:border-box;border-left:1px dotted #b8b8b8"></div>
<svg style="position:absolute;left:0;top:0" width="20" height="594"><path d="M10 340.7 L13.5 344.2 L10 347.7" stroke="#3a3e42" stroke-width="0.95" fill="none"/></svg>
<div class="t" style="left:20.7px;top:340.2px;font-size:9.5px;line-height:9.5px;color:#31363b;font-weight:normal;">Miracle Waters, sidemount, Aug 2014 (1 dive)</div>
<svg style="position:absolute;left:0;top:0" width="20" height="594"><path d="M9 357.0 L12.5 360.5 L16 357.0" stroke="#3a3e42" stroke-width="0.95" fill="none"/></svg>
<div class="t" style="left:20.7px;top:354.9px;font-size:9.5px;line-height:9.5px;color:#31363b;font-weight:normal;">Aliwal Shoal, Umkomaas,, Jun 2014 (4 dives)</div>
<div style="position:absolute;left:25px;top:373.78px;width:7px;height:1.0px;box-sizing:border-box;background:#b8b8b8"></div>
<div class="t" style="left:34.2px;top:369.7px;font-size:9.5px;line-height:9.5px;color:#31363b;font-weight:normal;">59</div>
<div class="t" style="left:56.2px;top:369.7px;font-size:9.5px;line-height:9.5px;color:#31363b;font-weight:normal;">Sun 15 Jun 2014 1:4...</div>
<svg style="position:absolute;left:155px;top:367.58px" width="59" height="13" viewBox="0 0 59 13"><polygon points="5.30,1.40 6.77,4.38 10.06,4.85 7.68,7.17 8.24,10.45 5.30,8.90 2.36,10.45 2.92,7.17 0.54,4.85 3.83,4.38" fill="#f2ee08" stroke="#7a7418" stroke-width="0.8" stroke-linejoin="round"/><polygon points="16.30,1.40 17.77,4.38 21.06,4.85 18.68,7.17 19.24,10.45 16.30,8.90 13.36,10.45 13.92,7.17 11.54,4.85 14.83,4.38" fill="#f2ee08" stroke="#7a7418" stroke-width="0.8" stroke-linejoin="round"/><polygon points="27.30,1.40 28.77,4.38 32.06,4.85 29.68,7.17 30.24,10.45 27.30,8.90 24.36,10.45 24.92,7.17 22.54,4.85 25.83,4.38" fill="#f2ee08" stroke="#7a7418" stroke-width="0.8" stroke-linejoin="round"/><polygon points="38.30,1.40 39.77,4.38 43.06,4.85 40.68,7.17 41.24,10.45 38.30,8.90 35.36,10.45 35.92,7.17 33.54,4.85 36.83,4.38" fill="#f2ee08" stroke="#7a7418" stroke-width="0.8" stroke-linejoin="round"/><polygon points="49.30,1.15 50.84,4.28 54.29,4.78 51.80,7.21 52.39,10.65 49.30,9.03 46.21,10.65 46.80,7.21 44.31,4.78 47.76,4.28" fill="#f6f6f6" stroke="#c4c4c4" stroke-width="0.8" stroke-linejoin="round"/></svg>
<div class="t" style="right:494.8px;top:369.7px;font-size:9.5px;line-height:9.5px;color:#31363b;font-weight:normal;">18.4</div>
<div class="t" style="right:446.0px;top:369.7px;font-size:9.5px;line-height:9.5px;color:#31363b;font-weight:normal;">59</div>
<svg style="position:absolute;left:309px;top:368.5px" width="10" height="10" viewBox="0 0 10 10"><defs><radialGradient id="gl" cx="0.4" cy="0.35" r="0.7"><stop offset="0" stop-color="#7cc85a"/><stop offset="1" stop-color="#2e7a26"/></radialGradient></defs><circle cx="4.8" cy="5" r="4.5" fill="url(#gl)"/><path d="M4.6 1.2 Q6.2 3 5 4.6 Q3.8 6 4.5 8.6 Q5.5 9.4 6.5 9 Q6 7 7 5.6 Q8.6 4.6 8.4 3 Q7 1 4.6 1.2 Z" fill="#4a7fd0" opacity="0.85"/></svg>
<div class="t" style="left:322.7px;top:369.7px;font-size:9.5px;line-height:9.5px;color:#31363b;font-weight:normal;">Aliwal Shoal: Chunnel</div>
<div style="position:absolute;left:25px;top:388.57px;width:7px;height:1.0px;box-sizing:border-box;background:#b8b8b8"></div>
<div class="t" style="left:34.2px;top:384.5px;font-size:9.5px;line-height:9.5px;color:#31363b;font-weight:normal;">58</div>
<div class="t" style="left:56.2px;top:384.5px;font-size:9.5px;line-height:9.5px;color:#31363b;font-weight:normal;">Sun 15 Jun 2014 9:5...</div>
<svg style="position:absolute;left:155px;top:382.37px" width="59" height="13" viewBox="0 0 59 13"><polygon points="5.30,1.40 6.77,4.38 10.06,4.85 7.68,7.17 8.24,10.45 5.30,8.90 2.36,10.45 2.92,7.17 0.54,4.85 3.83,4.38" fill="#f2ee08" stroke="#7a7418" stroke-width="0.8" stroke-linejoin="round"/><polygon points="16.30,1.40 17.77,4.38 21.06,4.85 18.68,7.17 19.24,10.45 16.30,8.90 13.36,10.45 13.92,7.17 11.54,4.85 14.83,4.38" fill="#f2ee08" stroke="#7a7418" stroke-width="0.8" stroke-linejoin="round"/><polygon points="27.30,1.40 28.77,4.38 32.06,4.85 29.68,7.17 30.24,10.45 27.30,8.90 24.36,10.45 24.92,7.17 22.54,4.85 25.83,4.38" fill="#f2ee08" stroke="#7a7418" stroke-width="0.8" stroke-linejoin="round"/><polygon points="38.30,1.15 39.84,4.28 43.29,4.78 40.80,7.21 41.39,10.65 38.30,9.03 35.21,10.65 35.80,7.21 33.31,4.78 36.76,4.28" fill="#f6f6f6" stroke="#c4c4c4" stroke-width="0.8" stroke-linejoin="round"/><polygon points="49.30,1.15 50.84,4.28 54.29,4.78 51.80,7.21 52.39,10.65 49.30,9.03 46.21,10.65 46.80,7.21 44.31,4.78 47.76,4.28" fill="#f6f6f6" stroke="#c4c4c4" stroke-width="0.8" stroke-linejoin="round"/></svg>
<div class="t" style="right:494.8px;top:384.5px;font-size:9.5px;line-height:9.5px;color:#31363b;font-weight:normal;">31</div>
<div class="t" style="right:446.0px;top:384.5px;font-size:9.5px;line-height:9.5px;color:#31363b;font-weight:normal;">37</div>
<svg style="position:absolute;left:309px;top:383.3px" width="10" height="10" viewBox="0 0 10 10"><defs><radialGradient id="gl" cx="0.4" cy="0.35" r="0.7"><stop offset="0" stop-color="#7cc85a"/><stop offset="1" stop-color="#2e7a26"/></radialGradient></defs><circle cx="4.8" cy="5" r="4.5" fill="url(#gl)"/><path d="M4.6 1.2 Q6.2 3 5 4.6 Q3.8 6 4.5 8.6 Q5.5 9.4 6.5 9 Q6 7 7 5.6 Q8.6 4.6 8.4 3 Q7 1 4.6 1.2 Z" fill="#4a7fd0" opacity="0.85"/></svg>
<div class="t" style="left:322.7px;top:384.5px;font-size:9.5px;line-height:9.5px;color:#31363b;font-weight:normal;">Aliwal Shoal: PRODUCE wreck</div>
<div style="position:absolute;left:32px;top:396.26px;width:472px;height:14.100000000000023px;box-sizing:border-box;background:#3daee9"></div>
<div style="position:absolute;left:25px;top:403.36px;width:7px;height:1.0px;box-sizing:border-box;background:#b8b8b8"></div>
<div class="t" style="left:34.2px;top:399.3px;font-size:9.5px;line-height:9.5px;color:#fcfcfc;font-weight:normal;">57</div>
<div class="t" style="left:56.2px;top:399.3px;font-size:9.5px;line-height:9.5px;color:#fcfcfc;font-weight:normal;">Sat 14 Jun 2014 12:...</div>
<svg style="position:absolute;left:155px;top:397.16px" width="59" height="13" viewBox="0 0 59 13"><polygon points="5.30,1.40 6.77,4.38 10.06,4.85 7.68,7.17 8.24,10.45 5.30,8.90 2.36,10.45 2.92,7.17 0.54,4.85 3.83,4.38" fill="#f2ee08" stroke="#7a7418" stroke-width="0.8" stroke-linejoin="round"/><polygon points="16.30,1.40 17.77,4.38 21.06,4.85 18.68,7.17 19.24,10.45 16.30,8.90 13.36,10.45 13.92,7.17 11.54,4.85 14.83,4.38" fill="#f2ee08" stroke="#7a7418" stroke-width="0.8" stroke-linejoin="round"/><polygon points="27.30,1.15 28.84,4.28 32.29,4.78 29.80,7.21 30.39,10.65 27.30,9.03 24.21,10.65 24.80,7.21 22.31,4.78 25.76,4.28" fill="#eceef0" stroke="#dde6ee" stroke-width="0.8" stroke-linejoin="round"/><polygon points="38.30,1.15 39.84,4.28 43.29,4.78 40.80,7.21 41.39,10.65 38.30,9.03 35.21,10.65 35.80,7.21 33.31,4.78 36.76,4.28" fill="#eceef0" stroke="#dde6ee" stroke-width="0.8" stroke-linejoin="round"/><polygon points="49.30,1.15 50.84,4.28 54.29,4.78 51.80,7.21 52.39,10.65 49.30,9.03 46.21,10.65 46.80,7.21 44.31,4.78 47.76,4.28" fill="#eceef0" stroke="#dde6ee" stroke-width="0.8" stroke-linejoin="round"/></svg>
<div class="t" style="right:494.8px;top:399.3px;font-size:9.5px;line-height:9.5px;color:#fcfcfc;font-weight:normal;">19.1</div>
<div class="t" style="right:446.0px;top:399.3px;font-size:9.5px;line-height:9.5px;color:#fcfcfc;font-weight:normal;">1:12</div>
<svg style="position:absolute;left:309px;top:398.1px" width="10" height="10" viewBox="0 0 10 10"><defs><radialGradient id="gl" cx="0.4" cy="0.35" r="0.7"><stop offset="0" stop-color="#7cc85a"/><stop offset="1" stop-color="#2e7a26"/></radialGradient></defs><circle cx="4.8" cy="5" r="4.5" fill="url(#gl)"/><path d="M4.6 1.2 Q6.2 3 5 4.6 Q3.8 6 4.5 8.6 Q5.5 9.4 6.5 9 Q6 7 7 5.6 Q8.6 4.6 8.4 3 Q7 1 4.6 1.2 Z" fill="#4a7fd0" opacity="0.85"/></svg>
<div class="t" style="left:322.7px;top:399.3px;font-size:9.5px;line-height:9.5px;color:#fcfcfc;font-weight:normal;">Aliwal Shoal: Raggie's Cave, Inner Edge,</div>
<div style="position:absolute;left:25px;top:418.15px;width:7px;height:1.0px;box-sizing:border-box;background:#b8b8b8"></div>
<div class="t" style="left:34.2px;top:414.1px;font-size:9.5px;line-height:9.5px;color:#31363b;font-weight:normal;">56</div>
<div class="t" style="left:56.2px;top:414.1px;font-size:9.5px;line-height:9.5px;color:#31363b;font-weight:normal;">Sat 14 Jun 2014 8:0...</div>
<svg style="position:absolute;left:155px;top:411.95px" width="59" height="13" viewBox="0 0 59 13"><polygon points="5.30,1.40 6.77,4.38 10.06,4.85 7.68,7.17 8.24,10.45 5.30,8.90 2.36,10.45 2.92,7.17 0.54,4.85 3.83,4.38" fill="#f2ee08" stroke="#7a7418" stroke-width="0.8" stroke-linejoin="round"/><polygon points="16.30,1.40 17.77,4.38 21.06,4.85 18.68,7.17 19.24,10.45 16.30,8.90 13.36,10.45 13.92,7.17 11.54,4.85 14.83,4.38" fill="#f2ee08" stroke="#7a7418" stroke-width="0.8" stroke-linejoin="round"/><polygon points="27.30,1.15 28.84,4.28 32.29,4.78 29.80,7.21 30.39,10.65 27.30,9.03 24.21,10.65 24.80,7.21 22.31,4.78 25.76,4.28" fill="#f6f6f6" stroke="#c4c4c4" stroke-width="0.8" stroke-linejoin="round"/><polygon points="38.30,1.15 39.84,4.28 43.29,4.78 40.80,7.21 41.39,10.65 38.30,9.03 35.21,10.65 35.80,7.21 33.31,4.78 36.76,4.28" fill="#f6f6f6" stroke="#c4c4c4" stroke-width="0.8" stroke-linejoin="round"/><polygon points="49.30,1.15 50.84,4.28 54.29,4.78 51.80,7.21 52.39,10.65 49.30,9.03 46.21,10.65 46.80,7.21 44.31,4.78 47.76,4.28" fill="#f6f6f6" stroke="#c4c4c4" stroke-width="0.8" stroke-linejoin="round"/></svg>
<div class="t" style="right:494.8px;top:414.1px;font-size:9.5px;line-height:9.5px;color:#31363b;font-weight:normal;">26</div>
<div class="t" style="right:446.0px;top:414.1px;font-size:9.5px;line-height:9.5px;color:#31363b;font-weight:normal;">55</div>
<svg style="position:absolute;left:309px;top:412.8px" width="10" height="10" viewBox="0 0 10 10"><defs><radialGradient id="gl" cx="0.4" cy="0.35" r="0.7"><stop offset="0" stop-color="#7cc85a"/><stop offset="1" stop-color="#2e7a26"/></radialGradient></defs><circle cx="4.8" cy="5" r="4.5" fill="url(#gl)"/><path d="M4.6 1.2 Q6.2 3 5 4.6 Q3.8 6 4.5 8.6 Q5.5 9.4 6.5 9 Q6 7 7 5.6 Q8.6 4.6 8.4 3 Q7 1 4.6 1.2 Z" fill="#4a7fd0" opacity="0.85"/></svg>
<div class="t" style="left:322.7px;top:414.1px;font-size:9.5px;line-height:9.5px;color:#31363b;font-weight:normal;">Aliwal Shoal: Cathedral</div>
<svg style="position:absolute;left:0;top:0" width="20" height="594"><path d="M10 429.4 L13.5 432.9 L10 436.4" stroke="#3a3e42" stroke-width="0.95" fill="none"/></svg>
<div class="t" style="left:20.7px;top:428.9px;font-size:9.5px;line-height:9.5px;color:#31363b;font-weight:normal;">Komati Springs, Jun 2014 (4 dives)</div>
<svg style="position:absolute;left:0;top:0" width="20" height="594"><path d="M10 444.2 L13.5 447.7 L10 451.2" stroke="#3a3e42" stroke-width="0.95" fill="none"/></svg>
<div class="t" style="left:20.7px;top:443.7px;font-size:9.5px;line-height:9.5px;color:#31363b;font-weight:normal;">Miracle Waters, Geko Divers sidemount, May 2014 (1 dive)</div>
<svg style="position:absolute;left:0;top:0" width="20" height="594"><path d="M10 459.0 L13.5 462.5 L10 466.0" stroke="#3a3e42" stroke-width="0.95" fill="none"/></svg>
<div class="t" style="left:20.7px;top:458.5px;font-size:9.5px;line-height:9.5px;color:#31363b;font-weight:normal;">Komati Springs, Mar 2014 (8 dives)</div>
<svg style="position:absolute;left:0;top:0" width="20" height="594"><path d="M10 473.8 L13.5 477.3 L10 480.8" stroke="#3a3e42" stroke-width="0.95" fill="none"/></svg>
<div class="t" style="left:20.7px;top:473.3px;font-size:9.5px;line-height:9.5px;color:#31363b;font-weight:normal;">Miracle Waters, Geko Divers sidemount, Mar 2014 (2 dives)</div>
<svg style="position:absolute;left:0;top:0" width="20" height="594"><path d="M10 488.6 L13.5 492.1 L10 495.6" stroke="#3a3e42" stroke-width="0.95" fill="none"/></svg>
<div class="t" style="left:20.7px;top:488.1px;font-size:9.5px;line-height:9.5px;color:#31363b;font-weight:normal;">Aliwal Shoal, Umkomaas, Feb 2014 (7 dives)</div>
<svg style="position:absolute;left:0;top:0" width="20" height="594"><path d="M10 503.4 L13.5 506.9 L10 510.4" stroke="#3a3e42" stroke-width="0.95" fill="none"/></svg>
<div class="t" style="left:20.7px;top:502.8px;font-size:9.5px;line-height:9.5px;color:#31363b;font-weight:normal;">Simonstad, Cape, Feb 2014 (5 dives)</div>
<svg style="position:absolute;left:0;top:0" width="20" height="594"><path d="M10 518.2 L13.5 521.7 L10 525.2" stroke="#3a3e42" stroke-width="0.95" fill="none"/></svg>
<div class="t" style="left:20.7px;top:517.6px;font-size:9.5px;line-height:9.5px;color:#31363b;font-weight:normal;">Miracle Waters, Dec 2013 (3 dives)</div>
<svg style="position:absolute;left:0;top:0" width="20" height="594"><path d="M10 533.0 L13.5 536.5 L10 540.0" stroke="#3a3e42" stroke-width="0.95" fill="none"/></svg>
<div class="t" style="left:20.7px;top:532.4px;font-size:9.5px;line-height:9.5px;color:#31363b;font-weight:normal;">Sodwana Bay, Nov 2013 (7 dives)</div>
<svg style="position:absolute;left:0;top:0" width="20" height="594"><path d="M10 547.8 L13.5 551.3 L10 554.8" stroke="#3a3e42" stroke-width="0.95" fill="none"/></svg>
<div class="t" style="left:20.7px;top:547.2px;font-size:9.5px;line-height:9.5px;color:#31363b;font-weight:normal;">Simsontad, Cape Town, Aug 2013 (4 dives)</div>
<svg style="position:absolute;left:0;top:0" width="20" height="594"><path d="M10 562.5 L13.5 566.0 L10 569.5" stroke="#3a3e42" stroke-width="0.95" fill="none"/></svg>
<div class="t" style="left:20.7px;top:562.0px;font-size:9.5px;line-height:9.5px;color:#31363b;font-weight:normal;">Aliwal Shoal, Umkomaas, Aug 2013 (3 dives)</div>
<svg style="position:absolute;left:0;top:0" width="20" height="594"><path d="M10 577.3 L13.5 580.8 L10 584.3" stroke="#3a3e42" stroke-width="0.95" fill="none"/></svg>
<div class="t" style="left:20.7px;top:576.8px;font-size:9.5px;line-height:9.5px;color:#31363b;font-weight:normal;">Aquanzi Lodge, Jul 2013 (1 dive)</div>
<svg style="position:absolute;left:504px;top:318px" width="14" height="272" viewBox="0 0 14 272">
<path d="M4 10 L7 7 L10 10" stroke="#31363b" stroke-width="1.1" fill="none"/>
<rect x="3" y="16" width="8" height="240" rx="4" fill="#c2c3c4"/>
<rect x="3" y="144" width="8" height="90" rx="4" fill="#3daee9"/>
<path d="M4 261 L7 264 L10 261" stroke="#31363b" stroke-width="1.1" fill="none"/>
</svg>
<div style="position:absolute;left:519px;top:317px;width:226px;height:273px;box-sizing:border-box;background:#4a5a7b;overflow:hidden"></div>
<div style="position:absolute;left:519px;top:317px;width:53px;height:113px;box-sizing:border-box;background:#435069"></div>
<div style="position:absolute;left:519px;top:430px;width:53px;height:132px;box-sizing:border-box;background:#47556f"></div>
<div style="position:absolute;left:519px;top:562px;width:53px;height:28px;box-sizing:border-box;background:#45526e"></div>
<div style="position:absolute;left:572px;top:317px;width:133px;height:245px;box-sizing:border-box;background:#4a5a7c"></div>
<div style="position:absolute;left:572px;top:562px;width:133px;height:28px;box-sizing:border-box;background:#58688f"></div>
<div style="position:absolute;left:705px;top:317px;width:40px;height:245px;box-sizing:border-box;background:#5a6a95"></div>
<div style="position:absolute;left:705px;top:562px;width:40px;height:28px;box-sizing:border-box;background:#4b5b89"></div>
<div style="position:absolute;left:745px;top:317px;width:3px;height:275px;box-sizing:border-box;background:#fcfcfc"></div>
<div style="position:absolute;left:519px;top:590px;width:229px;height:2px;box-sizing:border-box;background:#fcfcfc"></div>
<div style="position:absolute;left:519px;top:317px;width:226px;height:273px;overflow:hidden">
<div style="position:absolute;left:-519px;top:-317px;width:750px;height:594px">
<svg style="position:absolute;left:0;top:0;overflow:visible" width="1" height="1">
<line x1="585.8" y1="352.4" x2="583.9" y2="359.7" stroke="#2a2a34" stroke-width="1"/>
<polygon points="587.5,344.0 599.8,348.5 597.6,356.9 585.8,352.4" fill="#c5313a"/>
<line x1="589.7" y1="344.7" x2="596.8" y2="356.3" stroke="#f6f0f0" stroke-width="1.8"/>
</svg>
<svg style="position:absolute;left:0;top:0;overflow:visible" width="1" height="1">
<line x1="572.3" y1="403.0" x2="570.4" y2="410.3" stroke="#2a2a34" stroke-width="1"/>
<polygon points="574.0,394.6 586.3,399.1 584.1,407.5 572.3,403.0" fill="#c5313a"/>
<line x1="576.2" y1="395.3" x2="583.3" y2="406.9" stroke="#f6f0f0" stroke-width="1.8"/>
</svg>
<svg style="position:absolute;left:0;top:0;overflow:visible" width="1" height="1">
<line x1="596.3" y1="401.7" x2="594.4" y2="409.0" stroke="#2a2a34" stroke-width="1"/>
<polygon points="598.0,393.3 610.3,397.8 608.1,406.2 596.3,401.7" fill="#c5313a"/>
<line x1="600.2" y1="394.0" x2="607.3" y2="405.6" stroke="#f6f0f0" stroke-width="1.8"/>
</svg>
<svg style="position:absolute;left:0;top:0;overflow:visible" width="1" height="1">
<line x1="588.3" y1="422.4" x2="586.4" y2="429.7" stroke="#2a2a34" stroke-width="1"/>
<polygon points="590.0,414.0 602.3,418.5 600.1,426.9 588.3,422.4" fill="#c5313a"/>
<line x1="592.2" y1="414.7" x2="599.3" y2="426.3" stroke="#f6f0f0" stroke-width="1.8"/>
</svg>
<svg style="position:absolute;left:0;top:0;overflow:visible" width="1" height="1">
<line x1="602.3" y1="431.7" x2="600.4" y2="439.0" stroke="#2a2a34" stroke-width="1"/>
<polygon points="604.0,423.3 616.3,427.8 614.1,436.2 602.3,431.7" fill="#c5313a"/>
<line x1="606.2" y1="424.0" x2="613.3" y2="435.6" stroke="#f6f0f0" stroke-width="1.8"/>
</svg>
<svg style="position:absolute;left:0;top:0;overflow:visible" width="1" height="1">
<line x1="581.6" y1="444.4" x2="579.7" y2="451.7" stroke="#2a2a34" stroke-width="1"/>
<polygon points="583.3,436.0 595.6,440.5 593.4,448.9 581.6,444.4" fill="#c5313a"/>
<line x1="585.5" y1="436.7" x2="592.6" y2="448.3" stroke="#f6f0f0" stroke-width="1.8"/>
</svg>
<svg style="position:absolute;left:0;top:0;overflow:visible" width="1" height="1">
<line x1="568.3" y1="451.1" x2="566.4" y2="458.4" stroke="#2a2a34" stroke-width="1"/>
<polygon points="570.0,442.7 582.3,447.2 580.1,455.6 568.3,451.1" fill="#c5313a"/>
<line x1="572.2" y1="443.4" x2="579.3" y2="455.0" stroke="#f6f0f0" stroke-width="1.8"/>
</svg>
<svg style="position:absolute;left:0;top:0;overflow:visible" width="1" height="1">
<line x1="574.3" y1="458.4" x2="572.4" y2="465.7" stroke="#2a2a34" stroke-width="1"/>
<polygon points="576.0,450.0 588.3,454.5 586.1,462.9 574.3,458.4" fill="#c5313a"/>
<line x1="578.2" y1="450.7" x2="585.3" y2="462.3" stroke="#f6f0f0" stroke-width="1.8"/>
</svg>
<svg style="position:absolute;left:0;top:0;overflow:visible" width="1" height="1">
<line x1="578.3" y1="480.4" x2="576.4" y2="487.7" stroke="#2a2a34" stroke-width="1"/>
<polygon points="580.0,472.0 592.3,476.5 590.1,484.9 578.3,480.4" fill="#c5313a"/>
<line x1="582.2" y1="472.7" x2="589.3" y2="484.3" stroke="#f6f0f0" stroke-width="1.8"/>
</svg>
<div class="t" style="left:601.8px;top:358.7px;font-size:8.9px;line-height:8.9px;font-weight:bold;color:#000;text-shadow:1px 0 0 #fff,-1px 0 0 #fff,0 1px 0 #fff,0 -1px 0 #fff,0.7px 0.7px 0 #fff,-0.7px -0.7px 0 #fff,0.7px -0.7px 0 #fff,-0.7px 0.7px 0 #fff;white-space:nowrap">Aliwal Shoal: PRODUCE wreck</div>
<div class="t" style="left:612.0px;top:399.7px;font-size:8.9px;line-height:8.9px;font-weight:bold;color:#000;text-shadow:1px 0 0 #fff,-1px 0 0 #fff,0 1px 0 #fff,0 -1px 0 #fff,0.7px 0.7px 0 #fff,-0.7px -0.7px 0 #fff,0.7px -0.7px 0 #fff,-0.7px 0.7px 0 #fff;white-space:nowrap">Aliwal Shoal: North Eastern Pinnacle</div>
<div class="t" style="left:588.4px;top:409.8px;font-size:8.9px;line-height:8.9px;font-weight:bold;color:#000;text-shadow:1px 0 0 #fff,-1px 0 0 #fff,0 1px 0 #fff,0 -1px 0 #fff,0.7px 0.7px 0 #fff,-0.7px -0.7px 0 #fff,0.7px -0.7px 0 #fff,-0.7px 0.7px 0 #fff;white-space:nowrap">Aliwal Shoal: Inner Edge</div>
<div class="t" style="left:604.3px;top:429.5px;font-size:8.9px;line-height:8.9px;font-weight:bold;color:#000;text-shadow:1px 0 0 #fff,-1px 0 0 #fff,0 1px 0 #fff,0 -1px 0 #fff,0.7px 0.7px 0 #fff,-0.7px -0.7px 0 #fff,0.7px -0.7px 0 #fff,-0.7px 0.7px 0 #fff;white-space:nowrap">Aliwal Shoal: Umkomaas</div>
<div class="t" style="left:596.5px;top:442.1px;font-size:8.9px;line-height:8.9px;font-weight:bold;color:#000;text-shadow:1px 0 0 #fff,-1px 0 0 #fff,0 1px 0 #fff,0 -1px 0 #fff,0.7px 0.7px 0 #fff,-0.7px -0.7px 0 #fff,0.7px -0.7px 0 #fff,-0.7px 0.7px 0 #fff;white-space:nowrap">Aliwal Shoal: Umkomaas</div>
<div class="t" style="left:618.4px;top:438.0px;font-size:8.9px;line-height:8.9px;font-weight:bold;color:#000;text-shadow:1px 0 0 #fff,-1px 0 0 #fff,0 1px 0 #fff,0 -1px 0 #fff,0.7px 0.7px 0 #fff,-0.7px -0.7px 0 #fff,0.7px -0.7px 0 #fff,-0.7px 0.7px 0 #fff;white-space:nowrap">Aliwal Shoal: North Sands - Cave</div>
<div class="t" style="left:452.0px;top:449.0px;font-size:8.9px;line-height:8.9px;font-weight:bold;color:#000;text-shadow:1px 0 0 #fff,-1px 0 0 #fff,0 1px 0 #fff,0 -1px 0 #fff,0.7px 0.7px 0 #fff,-0.7px -0.7px 0 #fff,0.7px -0.7px 0 #fff,-0.7px 0.7px 0 #fff;white-space:nowrap">Aliwal Shoal: Chunnel</div>
<div class="t" style="left:654.5px;top:452.1px;font-size:8.9px;line-height:8.9px;font-weight:bold;color:#000;text-shadow:1px 0 0 #fff,-1px 0 0 #fff,0 1px 0 #fff,0 -1px 0 #fff,0.7px 0.7px 0 #fff,-0.7px -0.7px 0 #fff,0.7px -0.7px 0 #fff,-0.7px 0.7px 0 #fff;white-space:nowrap">Aliwal Shoal: Raggie's Cave</div>
<div class="t" style="left:490.0px;top:459.3px;font-size:8.9px;line-height:8.9px;font-weight:bold;color:#000;text-shadow:1px 0 0 #fff,-1px 0 0 #fff,0 1px 0 #fff,0 -1px 0 #fff,0.7px 0.7px 0 #fff,-0.7px -0.7px 0 #fff,0.7px -0.7px 0 #fff,-0.7px 0.7px 0 #fff;white-space:nowrap">Aliwal Shoal: Chunnel</div>
<div class="t" style="left:590.2px;top:467.1px;font-size:8.9px;line-height:8.9px;font-weight:bold;color:#000;text-shadow:1px 0 0 #fff,-1px 0 0 #fff,0 1px 0 #fff,0 -1px 0 #fff,0.7px 0.7px 0 #fff,-0.7px -0.7px 0 #fff,0.7px -0.7px 0 #fff,-0.7px 0.7px 0 #fff;white-space:nowrap">Aliwal Shoal: Cathedral</div>
<div class="t" style="left:595.9px;top:486.6px;font-size:8.9px;line-height:8.9px;font-weight:bold;color:#000;text-shadow:1px 0 0 #fff,-1px 0 0 #fff,0 1px 0 #fff,0 -1px 0 #fff,0.7px 0.7px 0 #fff,-0.7px -0.7px 0 #fff,0.7px -0.7px 0 #fff,-0.7px 0.7px 0 #fff;white-space:nowrap">Aliwal Shoal: Umkomaas</div>
<svg style="position:absolute;left:0;top:0;overflow:visible" width="1" height="1">
<line x1="605.0" y1="453.7" x2="603.1" y2="461.0" stroke="#2a2a34" stroke-width="1"/>
<polygon points="606.7,445.3 619.0,449.8 616.8,458.2 605.0,453.7" fill="#c5313a"/>
<line x1="608.9" y1="446.0" x2="616.0" y2="457.6" stroke="#f6f0f0" stroke-width="1.8"/>
</svg>
<svg style="position:absolute;left:0;top:0;overflow:visible" width="1" height="1">
<line x1="634.1" y1="444.5" x2="631.7" y2="453.6" stroke="#2a2a34" stroke-width="1"/>
<polygon points="636.2,434.0 651.6,439.6 648.8,450.1 634.1,444.5" fill="#fa2a24"/>
<line x1="639.0" y1="434.8" x2="647.8" y2="449.4" stroke="#f6f0f0" stroke-width="2.2"/>
</svg>
</div></div>
</div></body></html>
